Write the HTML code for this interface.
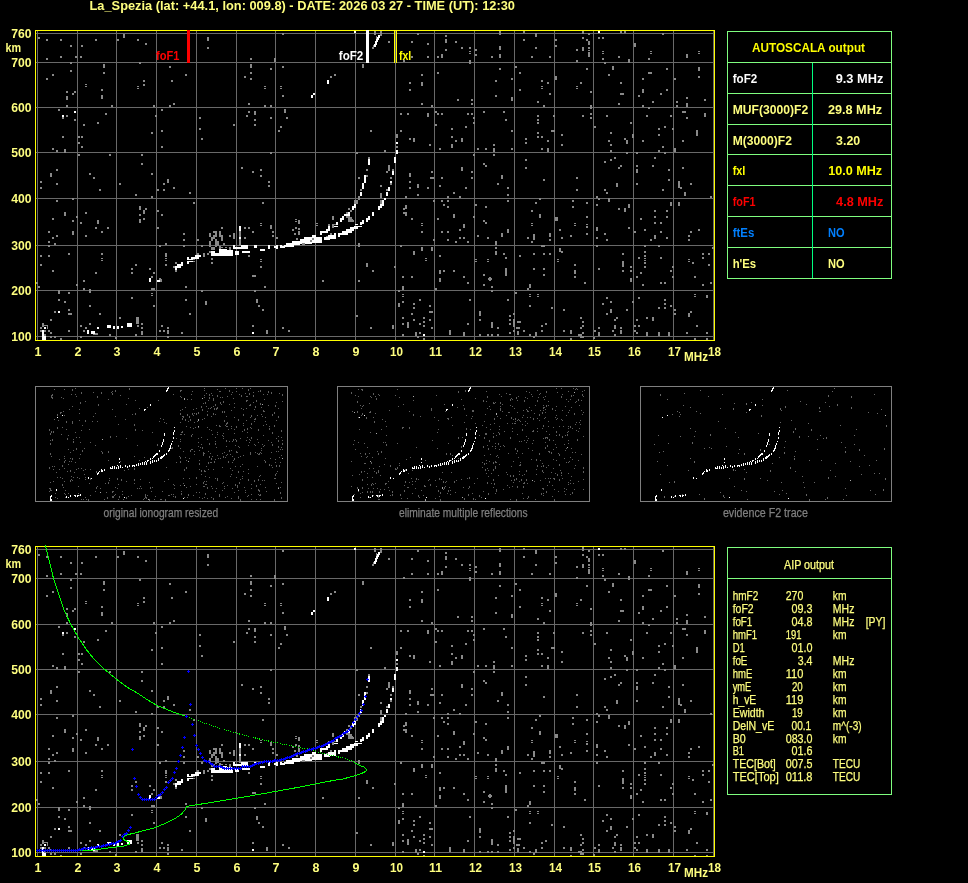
<!DOCTYPE html><html><head><meta charset="utf-8"><title>AUTOSCALA ionogram</title><style>html,body{margin:0;padding:0;background:#000;overflow:hidden}</style></head><body><svg width="968" height="883" viewBox="0 0 968 883" shape-rendering="crispEdges" style="display:block;will-change:transform;opacity:0.999">
<defs><g id="iono"><path d="M38 37h2v2h-2zM46 39h2v2h-2zM60 39h2v2h-2zM70 45h2v2h-2zM81 45h2v2h-2zM95 39h2v2h-2zM117 39h2v2h-2zM123 34h2v4h-2zM137 39h2v2h-2zM145 43h2v2h-2zM46 58h2v2h-2zM60 56h2v2h-2zM75 56h2v2h-2zM80 56h2v2h-2zM207 37h2v4h-2zM207 47h2v2h-2zM70 62h2v2h-2zM70 70h2v2h-2zM52 74h2v2h-2zM46 78h2v2h-2zM103 64h2v4h-2zM103 72h2v2h-2zM85 84h2v1h-2zM85 86h2v1h-2zM101 89h2v2h-2zM101 95h2v4h-2zM66 91h2v2h-2zM74 91h2v2h-2zM72 93h2v2h-2zM66 96h2v4h-2zM66 105h2v2h-2zM111 105h2v2h-2zM139 62h2v2h-2zM143 80h2v2h-2zM143 84h2v2h-2zM137 86h2v1h-2zM137 88h2v1h-2zM153 105h2v2h-2zM169 66h2v2h-2zM171 80h2v2h-2zM185 74h2v2h-2zM169 105h2v2h-2zM173 103h2v2h-2zM58 109h2v2h-2zM66 115h2v2h-2zM62 117h2v2h-2zM74 119h2v2h-2zM83 124h2v2h-2zM97 122h2v2h-2zM105 113h2v2h-2zM62 136h2v2h-2zM78 136h2v2h-2zM81 136h2v2h-2zM78 142h2v2h-2zM81 146h2v2h-2zM52 148h2v2h-2zM56 150h2v2h-2zM64 149h2v4h-2zM161 109h2v2h-2zM155 115h2v2h-2zM161 130h2v2h-2zM151 132h2v2h-2zM161 146h2v2h-2zM199 117h2v2h-2zM199 128h2v2h-2zM201 138h2v2h-2zM78 154h2v2h-2zM109 154h2v2h-2zM141 154h2v2h-2zM141 163h2v2h-2zM56 169h2v2h-2zM50 173h2v4h-2zM89 173h2v2h-2zM93 177h2v2h-2zM151 173h2v2h-2zM40 181h2v2h-2zM56 183h2v2h-2zM40 187h2v2h-2zM119 183h2v2h-2zM163 183h2v2h-2zM167 179h2v4h-2zM173 187h2v2h-2zM282 33h2v2h-2zM250 58h2v2h-2zM274 58h2v4h-2zM250 64h2v4h-2zM250 72h2v2h-2zM244 76h2v2h-2zM250 78h2v2h-2zM270 68h2v2h-2zM282 66h2v2h-2zM264 86h2v1h-2zM264 88h2v1h-2zM280 86h2v1h-2zM280 88h2v1h-2zM282 95h2v2h-2zM248 103h2v2h-2zM264 105h2v2h-2zM270 105h2v2h-2zM248 111h2v2h-2zM246 115h2v2h-2zM254 111h2v4h-2zM254 119h2v2h-2zM254 124h2v2h-2zM270 117h2v2h-2zM284 109h2v4h-2zM286 117h2v2h-2zM233 124h2v2h-2zM280 126h2v2h-2zM278 130h2v2h-2zM270 152h2v2h-2zM241 167h2v2h-2zM252 171h2v2h-2zM260 169h2v2h-2zM260 175h2v2h-2zM268 181h2v2h-2zM268 185h2v2h-2zM356 152h2v2h-2zM362 64h2v4h-2zM330 76h2v2h-2zM334 74h2v2h-2zM370 130h2v2h-2zM358 177h2v2h-2zM366 169h2v2h-2zM374 31h2v4h-2zM372 47h2v2h-2zM380 31h2v4h-2zM388 41h2v2h-2zM417 33h2v2h-2zM411 41h2v2h-2zM427 43h2v2h-2zM411 56h2v2h-2zM427 56h2v2h-2zM403 60h2v2h-2zM445 35h2v2h-2zM445 39h2v4h-2zM445 49h2v2h-2zM455 41h2v2h-2zM461 47h2v2h-2zM437 56h2v2h-2zM441 54h2v4h-2zM469 47h2v2h-2zM469 51h2v1h-2zM469 53h2v1h-2zM475 49h2v2h-2zM475 54h2v2h-2zM469 60h2v4h-2zM491 56h2v2h-2zM499 31h2v4h-2zM499 46h2v4h-2zM499 54h2v4h-2zM523 31h2v2h-2zM523 39h2v2h-2zM535 33h2v4h-2zM535 47h2v2h-2zM531 56h2v2h-2zM549 56h2v2h-2zM421 74h2v2h-2zM437 72h2v2h-2zM409 82h2v2h-2zM421 82h2v4h-2zM409 89h2v2h-2zM421 103h2v2h-2zM431 105h2v2h-2zM457 99h2v2h-2zM471 99h2v2h-2zM471 103h2v2h-2zM499 68h2v2h-2zM515 66h2v2h-2zM519 72h2v2h-2zM511 78h2v2h-2zM495 80h2v2h-2zM519 89h2v2h-2zM495 95h2v2h-2zM511 97h2v4h-2zM541 80h2v2h-2zM547 82h2v2h-2zM541 86h2v1h-2zM541 88h2v1h-2zM549 93h2v2h-2zM537 101h2v2h-2zM543 105h2v2h-2zM400 113h2v2h-2zM407 113h2v2h-2zM427 113h2v4h-2zM435 111h2v2h-2zM437 113h2v2h-2zM441 113h2v2h-2zM467 113h2v2h-2zM471 113h2v2h-2zM473 117h2v2h-2zM473 122h2v2h-2zM435 124h2v2h-2zM465 126h2v2h-2zM451 128h2v2h-2zM400 130h2v2h-2zM396 134h2v4h-2zM409 138h2v2h-2zM413 138h2v4h-2zM451 136h2v2h-2zM455 140h2v2h-2zM461 138h2v4h-2zM429 144h2v2h-2zM451 144h2v4h-2zM439 148h2v2h-2zM384 150h2v2h-2zM483 111h2v2h-2zM503 111h2v2h-2zM505 119h2v2h-2zM511 130h2v2h-2zM493 144h2v2h-2zM477 148h2v2h-2zM485 148h2v2h-2zM493 148h2v4h-2zM511 148h2v2h-2zM537 115h2v2h-2zM537 119h2v2h-2zM537 122h2v2h-2zM537 132h2v2h-2zM537 136h2v2h-2zM541 136h2v2h-2zM525 138h2v2h-2zM525 142h2v2h-2zM547 140h2v2h-2zM541 148h2v2h-2zM547 148h2v4h-2zM473 154h2v2h-2zM493 154h2v2h-2zM483 163h2v2h-2zM485 165h2v2h-2zM525 159h2v2h-2zM525 167h2v2h-2zM461 167h2v4h-2zM388 165h2v4h-2zM386 171h2v2h-2zM431 171h2v2h-2zM409 173h2v4h-2zM430 177h4v2h-4zM441 177h2v2h-2zM471 171h2v2h-2zM471 177h2v2h-2zM501 175h2v4h-2zM497 183h2v2h-2zM543 179h2v2h-2zM409 181h2v2h-2zM417 184h2v4h-2zM439 185h2v2h-2zM380 185h2v2h-2zM465 187h2v2h-2zM582 30h2v4h-2zM588 33h2v2h-2zM582 37h2v2h-2zM586 39h2v2h-2zM588 41h2v4h-2zM588 47h2v2h-2zM582 47h2v4h-2zM576 49h2v2h-2zM588 50h2v1h-2zM588 52h2v1h-2zM588 53h2v4h-2zM576 60h2v2h-2zM555 39h2v2h-2zM555 45h2v2h-2zM598 37h2v2h-2zM602 37h2v2h-2zM602 51h2v1h-2zM602 53h2v1h-2zM602 58h2v2h-2zM604 62h2v2h-2zM618 56h2v2h-2zM620 31h2v2h-2zM624 31h2v2h-2zM628 59h2v4h-2zM634 43h2v4h-2zM650 51h2v1h-2zM650 53h2v1h-2zM648 58h2v2h-2zM662 33h2v2h-2zM686 54h2v4h-2zM698 51h2v1h-2zM698 53h2v1h-2zM586 68h2v2h-2zM612 66h2v4h-2zM608 74h2v2h-2zM620 82h2v2h-2zM620 93h4v2h-4zM618 103h2v2h-2zM590 91h2v2h-2zM580 82h2v2h-2zM576 86h2v1h-2zM576 88h2v1h-2zM555 76h2v4h-2zM590 105h2v4h-2zM666 68h2v2h-2zM648 72h4v2h-4zM642 78h2v2h-2zM642 89h2v4h-2zM666 89h2v2h-2zM660 93h2v2h-2zM638 95h2v2h-2zM652 101h2v2h-2zM642 105h2v2h-2zM648 107h2v2h-2zM674 78h2v2h-2zM698 67h2v4h-2zM698 76h2v2h-2zM686 97h2v2h-2zM704 99h2v2h-2zM676 101h2v2h-2zM676 105h2v2h-2zM686 103h2v4h-2zM553 115h2v2h-2zM582 115h2v2h-2zM590 113h2v2h-2zM590 117h2v2h-2zM606 115h2v2h-2zM630 122h2v2h-2zM594 126h2v2h-2zM610 132h2v2h-2zM551 130h4v2h-4zM561 134h2v2h-2zM561 144h2v2h-2zM608 140h2v2h-2zM610 144h2v2h-2zM610 150h2v2h-2zM624 138h2v2h-2zM626 140h2v4h-2zM632 134h2v4h-2zM646 115h2v2h-2zM670 115h2v2h-2zM658 128h2v2h-2zM664 126h2v2h-2zM672 128h2v2h-2zM658 134h2v2h-2zM642 140h2v2h-2zM662 146h2v2h-2zM658 150h2v2h-2zM664 152h2v2h-2zM636 152h2v2h-2zM626 152h2v2h-2zM682 111h4v2h-4zM686 117h2v2h-2zM704 113h2v4h-2zM696 132h2v4h-2zM696 130h2v4h-2zM682 140h2v2h-2zM674 148h2v4h-2zM614 157h2v2h-2zM610 159h2v2h-2zM604 161h2v2h-2zM620 165h2v2h-2zM618 167h2v2h-2zM654 157h2v2h-2zM652 165h2v2h-2zM636 165h2v2h-2zM636 169h2v4h-2zM668 169h2v2h-2zM682 167h2v2h-2zM576 177h2v2h-2zM668 179h2v2h-2zM636 183h2v2h-2zM616 183h2v4h-2zM678 181h2v4h-2zM678 184h2v4h-2zM690 183h2v2h-2zM680 187h2v2h-2zM40 187h2v2h-2zM99 189h2v2h-2zM135 194h2v2h-2zM151 196h2v2h-2zM157 189h2v2h-2zM163 189h2v2h-2zM173 187h2v2h-2zM189 192h2v2h-2zM56 200h2v2h-2zM72 198h2v2h-2zM64 212h2v4h-2zM52 218h2v2h-2zM72 220h2v2h-2zM76 216h2v2h-2zM85 212h2v2h-2zM80 222h2v2h-2zM97 220h2v4h-2zM95 227h2v2h-2zM107 227h2v2h-2zM101 231h2v2h-2zM85 235h2v2h-2zM72 231h2v4h-2zM48 231h2v2h-2zM56 235h2v2h-2zM52 237h2v2h-2zM48 241h2v2h-2zM54 243h2v2h-2zM48 245h2v2h-2zM139 206h2v4h-2zM145 208h2v2h-2zM143 210h2v4h-2zM139 214h2v2h-2zM143 218h2v2h-2zM139 219h2v4h-2zM157 210h2v2h-2zM161 214h2v2h-2zM157 227h2v2h-2zM183 233h2v2h-2zM183 239h2v2h-2zM197 239h2v2h-2zM165 243h2v2h-2zM159 245h2v2h-2zM183 245h2v2h-2zM193 202h2v2h-2zM209 233h2v4h-2zM209 242h2v4h-2zM201 245h2v2h-2zM40 255h2v2h-2zM48 255h2v2h-2zM68 253h2v2h-2zM40 264h2v2h-2zM52 270h2v2h-2zM101 253h2v2h-2zM101 258h2v1h-2zM101 260h2v1h-2zM95 272h2v2h-2zM83 280h2v2h-2zM76 284h2v2h-2zM83 288h2v2h-2zM89 289h2v4h-2zM36 282h2v2h-2zM38 286h2v2h-2zM135 264h2v2h-2zM131 268h2v2h-2zM131 272h2v2h-2zM149 268h2v2h-2zM153 272h2v2h-2zM151 276h2v2h-2zM165 253h2v4h-2zM165 258h2v1h-2zM165 260h2v1h-2zM165 264h2v2h-2zM185 286h2v2h-2zM151 288h4v2h-4zM203 253h2v4h-2zM175 270h2v2h-2zM159 278h2v4h-2zM58 290h2v4h-2zM68 292h2v2h-2zM58 299h2v2h-2zM64 301h2v2h-2zM68 309h2v2h-2zM54 311h2v2h-2zM68 313h4v2h-4zM50 319h2v2h-2zM89 305h2v2h-2zM99 313h2v2h-2zM89 323h2v2h-2zM80 325h2v2h-2zM85 327h2v2h-2zM83 330h2v2h-2zM68 330h2v2h-2zM50 332h2v2h-2zM131 297h2v2h-2zM151 293h2v1h-2zM151 295h2v1h-2zM153 305h2v2h-2zM119 317h2v2h-2zM136 319h2v4h-2zM136 317h2v4h-2zM141 323h2v2h-2zM137 325h2v2h-2zM141 327h2v2h-2zM141 331h2v4h-2zM135 334h2v2h-2zM109 334h2v2h-2zM161 325h2v2h-2zM167 327h2v2h-2zM159 330h2v2h-2zM163 330h2v2h-2zM167 330h2v4h-2zM181 332h2v2h-2zM185 299h2v2h-2zM189 313h2v2h-2zM205 301h2v4h-2zM201 290h2v2h-2zM50 336h2v2h-2zM54 336h2v2h-2zM60 338h2v2h-2zM80 336h2v2h-2zM115 337h2v2h-2zM167 336h2v2h-2zM93 333h4v2h-4zM262 202h2v2h-2zM244 227h2v2h-2zM248 227h2v2h-2zM252 231h2v2h-2zM244 237h2v2h-2zM260 223h2v1h-2zM260 225h2v1h-2zM270 225h2v4h-2zM272 231h2v2h-2zM272 235h2v2h-2zM276 237h2v2h-2zM211 258h2v2h-2zM211 262h2v2h-2zM260 259h2v1h-2zM260 261h2v1h-2zM260 266h2v2h-2zM252 275h4v2h-4zM264 286h2v2h-2zM254 290h2v2h-2zM256 299h2v4h-2zM258 305h2v2h-2zM262 309h2v2h-2zM252 325h2v2h-2zM266 330h2v4h-2zM282 327h2v2h-2zM288 330h2v2h-2zM322 280h2v2h-2zM358 280h2v2h-2zM358 243h2v4h-2zM366 263h2v4h-2zM372 270h2v2h-2zM356 315h2v2h-2zM370 327h2v2h-2zM248 255h2v2h-2zM295 219h2v1h-2zM295 221h2v1h-2zM298 220h2v4h-2zM295 227h2v2h-2zM298 228h2v2h-2zM292 229h2v2h-2zM294 233h2v2h-2zM298 231h2v4h-2zM296 238h2v2h-2zM332 216h2v4h-2zM332 225h2v1h-2zM332 227h2v1h-2zM316 223h2v1h-2zM316 225h2v1h-2zM328 224h2v2h-2zM330 233h2v2h-2zM326 236h2v2h-2zM348 208h2v2h-2zM348 217h4v2h-4zM351 219h2v2h-2zM409 187h2v2h-2zM427 187h2v2h-2zM465 187h2v2h-2zM507 187h2v2h-2zM453 192h2v2h-2zM417 194h2v2h-2zM507 194h2v2h-2zM405 196h2v2h-2zM447 196h2v2h-2zM459 196h2v2h-2zM380 193h2v4h-2zM433 200h2v2h-2zM441 200h2v2h-2zM447 200h2v2h-2zM443 204h2v2h-2zM447 206h2v2h-2zM403 208h2v2h-2zM405 205h2v4h-2zM403 212h2v2h-2zM405 212h2v4h-2zM411 218h2v2h-2zM437 218h2v2h-2zM453 214h2v4h-2zM421 223h2v1h-2zM421 225h2v1h-2zM421 231h2v2h-2zM441 231h2v2h-2zM447 231h2v2h-2zM463 224h2v4h-2zM459 229h2v2h-2zM459 237h2v2h-2zM463 237h2v2h-2zM447 239h2v2h-2zM455 241h2v2h-2zM467 241h2v2h-2zM433 239h2v2h-2zM475 204h2v2h-2zM485 206h2v2h-2zM473 216h2v2h-2zM483 220h2v2h-2zM485 222h2v2h-2zM477 235h2v2h-2zM487 237h2v2h-2zM507 200h2v2h-2zM507 229h2v4h-2zM501 233h2v4h-2zM495 241h2v4h-2zM539 198h2v2h-2zM535 202h2v2h-2zM531 210h2v2h-2zM539 214h2v4h-2zM531 223h2v1h-2zM531 225h2v1h-2zM533 236h2v4h-2zM533 234h2v4h-2zM527 237h2v2h-2zM531 241h2v2h-2zM549 233h2v4h-2zM549 239h2v2h-2zM400 245h2v2h-2zM421 247h2v4h-2zM431 247h2v4h-2zM413 251h2v4h-2zM425 258h2v1h-2zM425 260h2v1h-2zM439 255h2v2h-2zM394 266h2v2h-2zM439 270h2v4h-2zM443 270h2v2h-2zM453 270h2v2h-2zM402 276h2v2h-2zM411 276h2v2h-2zM439 278h2v4h-2zM463 276h2v2h-2zM467 282h2v2h-2zM402 286h2v4h-2zM435 288h2v2h-2zM495 247h2v2h-2zM495 251h2v4h-2zM503 253h2v2h-2zM505 257h2v2h-2zM475 259h2v1h-2zM475 261h2v1h-2zM487 259h2v1h-2zM487 261h2v1h-2zM505 270h2v4h-2zM505 268h2v4h-2zM505 272h2v4h-2zM483 274h2v2h-2zM489 277h2v4h-2zM488 278h4v2h-4zM483 284h2v2h-2zM491 286h2v2h-2zM491 290h2v2h-2zM519 255h2v2h-2zM533 253h2v2h-2zM543 253h2v2h-2zM549 253h2v2h-2zM533 268h2v2h-2zM543 268h2v2h-2zM543 274h2v2h-2zM529 284h2v4h-2zM527 288h2v2h-2zM541 245h4v2h-4zM398 290h2v2h-2zM402 294h2v1h-2zM402 296h2v1h-2zM402 301h2v2h-2zM398 303h2v4h-2zM419 299h2v2h-2zM413 303h2v2h-2zM413 307h2v2h-2zM429 305h2v2h-2zM429 311h4v2h-4zM411 313h2v2h-2zM402 317h2v2h-2zM423 317h2v2h-2zM413 319h2v2h-2zM429 319h2v2h-2zM423 321h2v2h-2zM419 323h2v2h-2zM402 323h2v2h-2zM407 324h2v4h-2zM407 322h2v4h-2zM423 325h2v2h-2zM392 325h2v4h-2zM431 327h2v2h-2zM402 334h2v2h-2zM415 332h2v4h-2zM419 332h2v2h-2zM417 336h2v2h-2zM423 338h2v2h-2zM449 331h2v4h-2zM449 330h2v4h-2zM463 332h2v4h-2zM469 299h2v2h-2zM467 323h2v2h-2zM479 312h2v4h-2zM479 311h2v4h-2zM479 319h2v2h-2zM491 324h2v4h-2zM491 322h2v4h-2zM497 327h2v2h-2zM479 334h2v2h-2zM487 334h2v2h-2zM491 334h2v2h-2zM497 334h2v2h-2zM507 299h2v2h-2zM515 292h2v2h-2zM529 294h2v1h-2zM529 296h2v1h-2zM537 294h2v1h-2zM537 296h2v1h-2zM529 305h2v2h-2zM513 313h2v2h-2zM509 315h2v2h-2zM509 319h2v2h-2zM509 323h2v2h-2zM513 321h2v4h-2zM513 319h2v4h-2zM513 323h2v4h-2zM517 321h4v2h-4zM516 327h4v2h-4zM517 331h2v4h-2zM509 332h2v2h-2zM513 330h2v2h-2zM523 330h2v2h-2zM529 334h2v2h-2zM535 332h2v4h-2zM533 336h2v2h-2zM541 325h2v2h-2zM545 323h2v2h-2zM541 330h2v2h-2zM576 189h2v2h-2zM604 189h2v2h-2zM606 192h2v2h-2zM662 189h2v2h-2zM680 187h2v2h-2zM684 192h2v4h-2zM710 196h2v2h-2zM596 196h2v2h-2zM598 198h2v2h-2zM608 198h2v4h-2zM596 204h2v2h-2zM572 200h2v2h-2zM572 206h2v2h-2zM586 202h2v2h-2zM555 217h2v4h-2zM556 217h2v4h-2zM586 216h2v2h-2zM574 223h2v1h-2zM574 225h2v1h-2zM586 224h2v1h-2zM586 226h2v1h-2zM586 226h2v2h-2zM559 229h2v2h-2zM586 233h2v2h-2zM570 235h2v2h-2zM561 237h2v2h-2zM628 204h2v4h-2zM624 208h2v4h-2zM618 208h2v2h-2zM628 227h2v2h-2zM596 227h2v4h-2zM604 233h2v2h-2zM596 237h2v2h-2zM606 239h2v2h-2zM670 202h2v4h-2zM678 202h2v4h-2zM654 210h2v2h-2zM666 210h2v2h-2zM654 216h2v2h-2zM666 216h2v2h-2zM640 218h2v2h-2zM654 222h2v2h-2zM660 222h2v2h-2zM644 229h2v2h-2zM634 231h2v2h-2zM660 231h2v2h-2zM654 235h2v4h-2zM650 239h2v2h-2zM666 237h2v2h-2zM698 229h2v2h-2zM690 231h2v2h-2zM688 235h2v2h-2zM688 239h2v2h-2zM596 245h2v2h-2zM644 245h2v2h-2zM658 245h2v2h-2zM712 247h2v2h-2zM559 248h2v4h-2zM561 251h2v2h-2zM557 259h2v1h-2zM557 261h2v1h-2zM574 264h2v2h-2zM574 270h2v4h-2zM574 276h2v2h-2zM584 282h2v2h-2zM598 268h2v2h-2zM622 253h2v2h-2zM622 263h2v4h-2zM622 261h2v4h-2zM622 270h2v2h-2zM630 266h2v2h-2zM630 270h2v2h-2zM630 278h2v4h-2zM644 251h2v2h-2zM644 255h2v2h-2zM644 258h2v1h-2zM644 260h2v1h-2zM644 262h2v2h-2zM644 266h2v2h-2zM638 257h2v2h-2zM660 257h2v2h-2zM640 272h2v2h-2zM636 276h2v2h-2zM642 284h2v2h-2zM660 282h2v2h-2zM664 282h2v2h-2zM670 270h2v2h-2zM672 266h2v2h-2zM672 276h2v2h-2zM702 253h2v2h-2zM708 253h2v2h-2zM702 257h2v2h-2zM688 259h2v1h-2zM688 261h2v1h-2zM692 262h2v2h-2zM708 264h2v2h-2zM694 276h2v2h-2zM702 284h2v2h-2zM710 282h2v2h-2zM694 294h2v1h-2zM694 296h2v1h-2zM706 295h2v1h-2zM706 297h2v1h-2zM706 296h2v2h-2zM606 297h2v2h-2zM610 301h2v2h-2zM602 303h2v2h-2zM632 301h2v2h-2zM638 297h2v2h-2zM664 299h2v2h-2zM664 303h2v2h-2zM658 307h2v2h-2zM664 307h2v2h-2zM670 305h2v2h-2zM551 307h2v2h-2zM563 309h2v2h-2zM610 309h2v4h-2zM606 313h2v2h-2zM626 309h2v2h-2zM674 309h2v2h-2zM674 313h2v2h-2zM690 311h2v2h-2zM688 313h2v4h-2zM580 317h2v2h-2zM582 321h2v2h-2zM582 325h2v2h-2zM580 327h2v2h-2zM616 317h2v2h-2zM614 319h2v2h-2zM646 317h2v2h-2zM652 317h2v4h-2zM636 319h2v2h-2zM563 330h2v2h-2zM570 330h2v4h-2zM582 332h2v2h-2zM578 334h4v2h-4zM580 336h4v2h-4zM598 327h2v2h-2zM594 330h2v2h-2zM598 332h2v4h-2zM614 325h2v4h-2zM612 330h2v2h-2zM620 327h2v2h-2zM620 330h2v4h-2zM614 334h2v2h-2zM634 325h2v2h-2zM638 325h2v2h-2zM634 330h2v2h-2zM636 332h2v2h-2zM646 332h2v4h-2zM658 332h2v4h-2zM668 332h2v4h-2zM686 332h2v2h-2zM696 325h2v2h-2zM706 332h2v2h-2zM570 338h2v2h-2zM593 337h2v2h-2zM694 338h2v2h-2zM706 338h2v2h-2zM40 327h2v2h-2zM42 323h2v4h-2zM44 325h4v1h-4zM47 325h1v4h-1zM40 330h2v2h-2zM44 330h2v2h-2zM48 330h2v2h-2zM50 332h2v2h-2zM44 334h2v2h-2zM94 333h4v2h-4zM136 317h3v7h-3zM160 279h2v3h-2zM239 231h2v6h-2zM239 239h2v7h-2zM396 134h2v3h-2zM396 146h2v2h-2zM368 157h2v2h-2zM358 177h2v2h-2zM360 189h2v2h-2zM373 45h2v2h-2zM380 33h2v3h-2zM376 36h1v3h-1z" fill="#8a8a8a"/><path d="M74 111h2v2h-2zM62 115h2v2h-2zM58 311h2v2h-2zM252 332h2v2h-2zM423 334h2v2h-2zM42 330h2v10h-2zM44 336h2v4h-2zM44 327h2v2h-2zM87 330h2v4h-2zM91 331h4v3h-4zM97 327h2v2h-2zM107 325h4v3h-4zM113 326h2v3h-2zM117 326h2v3h-2zM121 326h2v2h-2zM127 323h5v4h-5zM149 278h2v4h-2zM157 280h3v2h-3zM175 266h2v4h-2zM175 266h6v2h-6zM177 264h6v2h-6zM181 262h2v2h-2zM187 257h2v3h-2zM187 259h6v1h-6zM191 257h8v2h-8zM195 255h6v2h-6zM187 261h2v3h-2zM187 261h6v1h-6zM211 251h4v5h-4zM215 253h4v3h-4zM219 249h8v7h-8zM227 250h6v6h-6zM235 251h4v4h-4zM233 245h2v2h-2zM233 247h8v2h-8zM241 245h7v4h-7zM242 251h8v2h-8zM239 226h2v5h-2zM239 237h2v2h-2zM254 245h3v3h-3zM260 249h5v2h-5zM268 245h2v4h-2zM274 246h4v2h-4zM280 246h5v2h-5zM276 245h2v4h-2zM280 245h2v2h-2zM284 245h10v2h-10zM286 243h14v2h-14zM292 241h12v2h-12zM300 239h12v5h-12zM304 237h12v2h-12zM312 235h4v2h-4zM312 239h10v4h-10zM316 237h6v2h-6zM324 237h6v3h-6zM328 235h2v2h-2zM330 235h6v4h-6zM334 233h2v2h-2zM338 233h2v4h-2zM340 233h8v2h-8zM342 231h10v2h-10zM346 229h8v2h-8zM350 227h8v2h-8zM354 226h4v1h-4zM355 224h3v1h-3zM358 226h4v1h-4zM360 222h2v3h-2zM362 220h2v4h-2zM366 218h2v4h-2zM368 216h2v4h-2zM372 212h2v4h-2zM378 206h2v4h-2zM380 204h2v4h-2zM382 200h2v6h-2zM384 198h2v2h-2zM386 192h2v4h-2zM388 187h2v4h-2zM390 181h2v2h-2zM392 171h2v4h-2zM394 157h2v6h-2zM396 150h2v4h-2zM396 142h2v2h-2zM320 231h2v4h-2zM320 231h8v2h-8zM326 229h4v2h-4zM328 226h2v3h-2zM336 222h2v3h-2zM334 226h4v1h-4zM340 218h2v4h-2zM342 216h2v4h-2zM344 214h6v2h-6zM348 212h2v4h-2zM352 206h2v4h-2zM354 204h2v4h-2zM360 192h2v4h-2zM362 183h2v6h-2zM364 175h2v8h-2zM368 159h2v6h-2zM598 31h2v2h-2zM311 95h2v3h-2zM313 93h2v2h-2zM327 80h2v4h-2zM354 31h2v2h-2zM374 44h2v3h-2zM375 41h2v4h-2zM376 39h2v3h-2zM377 37h2v3h-2zM378 35h2v3h-2z" fill="#fff"/><path d="M209 233h2v4h-2zM213 231h4v2h-4zM215 233h2v4h-2zM213 235h2v4h-2zM211 237h2v4h-2zM219 231h2v6h-2zM221 235h2v6h-2zM221 227h2v2h-2zM209 241h2v6h-2zM215 239h2v8h-2zM217 241h2v5h-2zM223 243h2v2h-2zM229 235h2v2h-2zM233 233h2v6h-2zM211 247h4v3h-4zM219 246h2v3h-2zM221 247h2v1h-2zM225 247h2v1h-2zM229 247h2v3h-2zM209 251h2v2h-2zM175 262h2v2h-2zM173 266h2v2h-2zM175 270h2v2h-2zM197 253h2v2h-2zM193 259h2v1h-2zM193 261h2v1h-2zM203 253h2v4h-2zM207 253h2v2h-2zM332 224h4v1h-4zM332 226h2v2h-2zM346 212h2v2h-2zM346 216h4v2h-4zM348 218h4v4h-4zM352 220h2v2h-2zM348 208h2v2h-2zM350 210h2v2h-2zM332 216h2v4h-2zM354 200h4v4h-4zM358 196h2v4h-2zM380 196h2v2h-2zM380 200h2v4h-2zM366 169h2v2h-2zM366 175h2v2h-2zM386 189h2v2h-2zM390 183h2v2h-2zM392 169h2v2h-2zM390 177h2v2h-2zM386 171h2v2h-2zM388 165h2v6h-2zM302 243h3v2h-3zM310 240h2v2h-2zM312 238h2v2h-2z" fill="#8a8a8a"/></g></defs>
<rect x="0" y="0" width="968" height="883" fill="#000"/>
<text x="89.5" y="10" fill="#ffff80" font-family="Liberation Sans, sans-serif" font-weight="bold" font-size="12.5" textLength="425.5" lengthAdjust="spacingAndGlyphs" xml:space="preserve">La_Spezia (lat: +44.1, lon: 009.8) - DATE: 2026 03 27 - TIME (UT): 12:30</text>
<g transform="translate(0,0)">
<path d="M37 31h1v309h-1zM77 31h1v309h-1zM116 31h1v309h-1zM156 31h1v309h-1zM196 31h1v309h-1zM236 31h1v309h-1zM275 31h1v309h-1zM315 31h1v309h-1zM355 31h1v309h-1zM395 31h1v309h-1zM434 31h1v309h-1zM474 31h1v309h-1zM514 31h1v309h-1zM554 31h1v309h-1zM593 31h1v309h-1zM633 31h1v309h-1zM673 31h1v309h-1zM713 31h1v309h-1zM36 33h678v1h-678zM36 62h678v1h-678zM36 107h678v1h-678zM36 152h678v1h-678zM36 198h678v1h-678zM36 245h678v1h-678zM36 290h678v1h-678zM36 336h678v1h-678z" fill="#6a6a6a"/>
<use href="#iono"/>
<path d="M35 30h680v1h-680zM35 340h680v1h-680zM35 30h1v311h-1zM714 30h1v311h-1z" fill="#ffff00"/>
<text x="31.5" y="38" fill="#ffff80" font-family="Liberation Sans, sans-serif" font-weight="bold" font-size="12.5" text-anchor="end" textLength="20.3" lengthAdjust="spacingAndGlyphs" xml:space="preserve">760</text>
<text x="31.5" y="67" fill="#ffff80" font-family="Liberation Sans, sans-serif" font-weight="bold" font-size="12.5" text-anchor="end" textLength="20.3" lengthAdjust="spacingAndGlyphs" xml:space="preserve">700</text>
<text x="31.5" y="112" fill="#ffff80" font-family="Liberation Sans, sans-serif" font-weight="bold" font-size="12.5" text-anchor="end" textLength="20.3" lengthAdjust="spacingAndGlyphs" xml:space="preserve">600</text>
<text x="31.5" y="157" fill="#ffff80" font-family="Liberation Sans, sans-serif" font-weight="bold" font-size="12.5" text-anchor="end" textLength="20.3" lengthAdjust="spacingAndGlyphs" xml:space="preserve">500</text>
<text x="31.5" y="203" fill="#ffff80" font-family="Liberation Sans, sans-serif" font-weight="bold" font-size="12.5" text-anchor="end" textLength="20.3" lengthAdjust="spacingAndGlyphs" xml:space="preserve">400</text>
<text x="31.5" y="250" fill="#ffff80" font-family="Liberation Sans, sans-serif" font-weight="bold" font-size="12.5" text-anchor="end" textLength="20.3" lengthAdjust="spacingAndGlyphs" xml:space="preserve">300</text>
<text x="31.5" y="295" fill="#ffff80" font-family="Liberation Sans, sans-serif" font-weight="bold" font-size="12.5" text-anchor="end" textLength="20.3" lengthAdjust="spacingAndGlyphs" xml:space="preserve">200</text>
<text x="31.5" y="341" fill="#ffff80" font-family="Liberation Sans, sans-serif" font-weight="bold" font-size="12.5" text-anchor="end" textLength="20.3" lengthAdjust="spacingAndGlyphs" xml:space="preserve">100</text>
<text x="5.5" y="52" fill="#ffff80" font-family="Liberation Sans, sans-serif" font-weight="bold" font-size="12.5" textLength="15.6" lengthAdjust="spacingAndGlyphs" xml:space="preserve">km</text>
<text x="38" y="356" fill="#ffff80" font-family="Liberation Sans, sans-serif" font-weight="bold" font-size="12.5" text-anchor="middle" xml:space="preserve">1</text>
<text x="78" y="356" fill="#ffff80" font-family="Liberation Sans, sans-serif" font-weight="bold" font-size="12.5" text-anchor="middle" xml:space="preserve">2</text>
<text x="117" y="356" fill="#ffff80" font-family="Liberation Sans, sans-serif" font-weight="bold" font-size="12.5" text-anchor="middle" xml:space="preserve">3</text>
<text x="157" y="356" fill="#ffff80" font-family="Liberation Sans, sans-serif" font-weight="bold" font-size="12.5" text-anchor="middle" xml:space="preserve">4</text>
<text x="197" y="356" fill="#ffff80" font-family="Liberation Sans, sans-serif" font-weight="bold" font-size="12.5" text-anchor="middle" xml:space="preserve">5</text>
<text x="237" y="356" fill="#ffff80" font-family="Liberation Sans, sans-serif" font-weight="bold" font-size="12.5" text-anchor="middle" xml:space="preserve">6</text>
<text x="276" y="356" fill="#ffff80" font-family="Liberation Sans, sans-serif" font-weight="bold" font-size="12.5" text-anchor="middle" xml:space="preserve">7</text>
<text x="316" y="356" fill="#ffff80" font-family="Liberation Sans, sans-serif" font-weight="bold" font-size="12.5" text-anchor="middle" xml:space="preserve">8</text>
<text x="356" y="356" fill="#ffff80" font-family="Liberation Sans, sans-serif" font-weight="bold" font-size="12.5" text-anchor="middle" xml:space="preserve">9</text>
<text x="396.5" y="356" fill="#ffff80" font-family="Liberation Sans, sans-serif" font-weight="bold" font-size="12.5" text-anchor="middle" textLength="13" lengthAdjust="spacingAndGlyphs" xml:space="preserve">10</text>
<text x="435.5" y="356" fill="#ffff80" font-family="Liberation Sans, sans-serif" font-weight="bold" font-size="12.5" text-anchor="middle" textLength="13" lengthAdjust="spacingAndGlyphs" xml:space="preserve">11</text>
<text x="475.5" y="356" fill="#ffff80" font-family="Liberation Sans, sans-serif" font-weight="bold" font-size="12.5" text-anchor="middle" textLength="13" lengthAdjust="spacingAndGlyphs" xml:space="preserve">12</text>
<text x="515.5" y="356" fill="#ffff80" font-family="Liberation Sans, sans-serif" font-weight="bold" font-size="12.5" text-anchor="middle" textLength="13" lengthAdjust="spacingAndGlyphs" xml:space="preserve">13</text>
<text x="555.5" y="356" fill="#ffff80" font-family="Liberation Sans, sans-serif" font-weight="bold" font-size="12.5" text-anchor="middle" textLength="13" lengthAdjust="spacingAndGlyphs" xml:space="preserve">14</text>
<text x="594.5" y="356" fill="#ffff80" font-family="Liberation Sans, sans-serif" font-weight="bold" font-size="12.5" text-anchor="middle" textLength="13" lengthAdjust="spacingAndGlyphs" xml:space="preserve">15</text>
<text x="634.5" y="356" fill="#ffff80" font-family="Liberation Sans, sans-serif" font-weight="bold" font-size="12.5" text-anchor="middle" textLength="13" lengthAdjust="spacingAndGlyphs" xml:space="preserve">16</text>
<text x="674.5" y="356" fill="#ffff80" font-family="Liberation Sans, sans-serif" font-weight="bold" font-size="12.5" text-anchor="middle" textLength="13" lengthAdjust="spacingAndGlyphs" xml:space="preserve">17</text>
<text x="714.5" y="356" fill="#ffff80" font-family="Liberation Sans, sans-serif" font-weight="bold" font-size="12.5" text-anchor="middle" textLength="13" lengthAdjust="spacingAndGlyphs" xml:space="preserve">18</text>
<text x="684" y="361" fill="#ffff80" font-family="Liberation Sans, sans-serif" font-weight="bold" font-size="12.5" textLength="24" lengthAdjust="spacingAndGlyphs" xml:space="preserve">MHz</text>
</g>
<g transform="translate(0,516)">
<path d="M37 31h1v309h-1zM77 31h1v309h-1zM116 31h1v309h-1zM156 31h1v309h-1zM196 31h1v309h-1zM236 31h1v309h-1zM275 31h1v309h-1zM315 31h1v309h-1zM355 31h1v309h-1zM395 31h1v309h-1zM434 31h1v309h-1zM474 31h1v309h-1zM514 31h1v309h-1zM554 31h1v309h-1zM593 31h1v309h-1zM633 31h1v309h-1zM673 31h1v309h-1zM713 31h1v309h-1zM36 33h678v1h-678zM36 62h678v1h-678zM36 108h678v1h-678zM36 153h678v1h-678zM36 198h678v1h-678zM36 245h678v1h-678zM36 291h678v1h-678zM36 336h678v1h-678z" fill="#6a6a6a"/>
<use href="#iono" y="1"/>
<path d="M35 30h680v1h-680zM35 340h680v1h-680zM35 30h1v311h-1zM714 30h1v311h-1z" fill="#ffff00"/>
<polyline points="45.2,28.6 45.6,30.0 48.6,42.6 53.2,61.2 57.9,76.1 64.4,94.7 70.9,108.6 78.3,121.6 85.8,132.8 93.2,142.1 104.4,153.2 115.5,162.5 126.7,170.9 137.8,177.4 146.2,183.0 157.2,189.6 175.8,197.0 186.9,200.7" fill="none" stroke="#00ff00" stroke-width="1" shape-rendering="crispEdges" /><polyline points="186.9,200.7 203.7,206.8 222.3,213.2 240.9,218.4 259.5,223.0 278.0,227.1 298.5,231.4 307.2,232.9 316.5,235.5 325.8,238.3 335.1,240.1 340.4,241.5 344.3,242.4 347.4,243.3 350.5,244.4 354.3,245.5" fill="none" stroke="#00ff00" stroke-width="1" shape-rendering="crispEdges" stroke-dasharray="1 1.3"/><polyline points="354.3,246.5 355.5,247.5 357.8,248.5 360.0,249.5 362.5,250.5 364.6,251.4 365.8,252.6 366.9,253.9 365.8,255.1 364.8,255.9 362.5,257.0 360.2,258.0 357.8,258.8 354.9,259.7 351.6,260.7 347.6,261.7 343.3,263.0 340.0,263.4 325.8,265.8 297.9,271.4 270.0,276.4 240.9,281.6 213.0,286.2 188.8,290.0 186.6,290.9 185.1,293.7 181.4,298.3 174.0,303.2 163.5,308.1 152.9,312.3 142.4,314.9 135.4,316.9 128.4,318.5 124.8,319.9 123.1,322.1 124.0,323.7 126.6,325.1 129.8,326.4 129.2,328.1 124.8,329.9 114.3,331.3 103.8,332.5 95.0,333.9 77.4,334.8" fill="none" stroke="#00ff00" stroke-width="1" shape-rendering="crispEdges" /><path d="M36 334h3v1h-3zM37 333h1v3h-1zM38 334h3v1h-3zM39 333h1v3h-1zM40 334h3v1h-3zM41 333h1v3h-1zM42 334h3v1h-3zM43 333h1v3h-1zM44 334h3v1h-3zM45 333h1v3h-1zM46 334h3v1h-3zM47 333h1v3h-1zM48 334h3v1h-3zM49 333h1v3h-1zM50 334h3v1h-3zM51 333h1v3h-1zM52 334h3v1h-3zM53 333h1v3h-1zM54 334h3v1h-3zM55 333h1v3h-1zM56 334h3v1h-3zM57 333h1v3h-1zM58 334h3v1h-3zM59 333h1v3h-1zM60 334h3v1h-3zM61 333h1v3h-1zM62 334h3v1h-3zM63 333h1v3h-1zM64 334h3v1h-3zM65 333h1v3h-1zM66 334h3v1h-3zM67 333h1v3h-1zM68 334h3v1h-3zM69 333h1v3h-1zM70 334h3v1h-3zM71 333h1v3h-1zM72 334h3v1h-3zM73 333h1v3h-1zM74 334h3v1h-3zM75 333h1v3h-1zM76 334h3v1h-3zM77 333h1v3h-1zM78 333h3v1h-3zM79 332h1v3h-1zM80 333h3v1h-3zM81 332h1v3h-1zM82 332h3v1h-3zM83 331h1v3h-1zM84 332h3v1h-3zM85 331h1v3h-1zM86 332h3v1h-3zM87 331h1v3h-1zM88 332h3v1h-3zM89 331h1v3h-1zM90 331h3v1h-3zM91 330h1v3h-1zM92 331h3v1h-3zM93 330h1v3h-1zM94 331h3v1h-3zM95 330h1v3h-1zM96 330h3v1h-3zM97 329h1v3h-1zM98 330h3v1h-3zM99 329h1v3h-1zM100 330h3v1h-3zM101 329h1v3h-1zM102 329h3v1h-3zM103 328h1v3h-1zM104 329h3v1h-3zM105 328h1v3h-1zM106 328h3v1h-3zM107 327h1v3h-1zM108 328h3v1h-3zM109 327h1v3h-1zM110 327h3v1h-3zM111 326h1v3h-1zM112 327h3v1h-3zM113 326h1v3h-1zM114 327h3v1h-3zM115 326h1v3h-1zM115 326h3v1h-3zM116 325h1v3h-1zM117 325h3v1h-3zM118 324h1v3h-1zM119 324h3v1h-3zM120 323h1v3h-1zM121 320h3v1h-3zM122 319h1v3h-1zM123 318h3v1h-3zM124 317h1v3h-1zM125 317h3v1h-3zM126 316h1v3h-1zM127 314h3v1h-3zM128 313h1v3h-1zM129 311h3v1h-3zM130 310h1v3h-1zM131 233h3v1h-3zM132 232h1v3h-1zM133 262h3v1h-3zM134 261h1v3h-1zM135 270h3v1h-3zM136 269h1v3h-1zM137 278h3v1h-3zM138 277h1v3h-1zM139 281h3v1h-3zM140 280h1v3h-1zM141 283h3v1h-3zM142 282h1v3h-1zM143 283h3v1h-3zM144 282h1v3h-1zM145 283h3v1h-3zM146 282h1v3h-1zM147 283h3v1h-3zM148 282h1v3h-1zM149 283h3v1h-3zM150 282h1v3h-1zM151 283h3v1h-3zM152 282h1v3h-1zM153 283h3v1h-3zM154 282h1v3h-1zM155 281h3v1h-3zM156 280h1v3h-1zM157 279h3v1h-3zM158 278h1v3h-1zM159 278h3v1h-3zM160 277h1v3h-1zM161 276h3v1h-3zM162 275h1v3h-1zM163 273h3v1h-3zM164 272h1v3h-1zM165 271h3v1h-3zM166 270h1v3h-1zM167 266h3v1h-3zM168 265h1v3h-1zM169 264h3v1h-3zM170 263h1v3h-1zM171 262h3v1h-3zM172 261h1v3h-1zM173 256h3v1h-3zM174 255h1v3h-1zM175 252h3v1h-3zM176 251h1v3h-1zM177 245h3v1h-3zM178 244h1v3h-1zM179 239h3v1h-3zM180 238h1v3h-1zM181 231h3v1h-3zM182 230h1v3h-1zM183 221h3v1h-3zM184 220h1v3h-1zM185 200h3v1h-3zM186 199h1v3h-1zM187 155h3v1h-3zM188 154h1v3h-1zM189 188h3v1h-3zM190 187h1v3h-1zM191 208h3v1h-3zM192 207h1v3h-1zM193 219h3v1h-3zM194 218h1v3h-1zM195 229h3v1h-3zM196 228h1v3h-1zM197 233h3v1h-3zM198 232h1v3h-1zM199 237h3v1h-3zM200 236h1v3h-1zM201 241h3v1h-3zM202 240h1v3h-1zM203 244h3v1h-3zM204 243h1v3h-1zM205 245h3v1h-3zM206 244h1v3h-1zM207 245h3v1h-3zM208 244h1v3h-1zM209 247h3v1h-3zM210 246h1v3h-1zM211 248h3v1h-3zM212 247h1v3h-1zM213 250h3v1h-3zM214 249h1v3h-1zM215 250h3v1h-3zM216 249h1v3h-1zM217 250h3v1h-3zM218 249h1v3h-1zM219 250h3v1h-3zM220 249h1v3h-1zM221 251h3v1h-3zM222 250h1v3h-1zM223 252h3v1h-3zM224 251h1v3h-1zM225 252h3v1h-3zM226 251h1v3h-1zM227 252h3v1h-3zM228 251h1v3h-1zM229 252h3v1h-3zM230 251h1v3h-1zM231 252h3v1h-3zM232 251h1v3h-1zM233 252h3v1h-3zM234 251h1v3h-1zM235 252h3v1h-3zM236 251h1v3h-1zM237 252h3v1h-3zM238 251h1v3h-1zM239 252h3v1h-3zM240 251h1v3h-1zM241 250h3v1h-3zM242 249h1v3h-1zM243 250h3v1h-3zM244 249h1v3h-1zM245 250h3v1h-3zM246 249h1v3h-1zM247 250h3v1h-3zM248 249h1v3h-1zM249 250h3v1h-3zM250 249h1v3h-1zM251 249h3v1h-3zM252 248h1v3h-1zM253 248h3v1h-3zM254 247h1v3h-1zM255 247h3v1h-3zM256 246h1v3h-1zM257 247h3v1h-3zM258 246h1v3h-1zM259 246h3v1h-3zM260 245h1v3h-1zM261 246h3v1h-3zM262 245h1v3h-1zM263 245h3v1h-3zM264 244h1v3h-1zM265 245h3v1h-3zM266 244h1v3h-1zM267 245h3v1h-3zM268 244h1v3h-1zM269 245h3v1h-3zM270 244h1v3h-1zM271 245h3v1h-3zM272 244h1v3h-1zM273 244h3v1h-3zM274 243h1v3h-1zM274 244h3v1h-3zM275 243h1v3h-1zM276 244h3v1h-3zM277 243h1v3h-1zM278 244h3v1h-3zM279 243h1v3h-1zM280 243h3v1h-3zM281 242h1v3h-1zM282 243h3v1h-3zM283 242h1v3h-1zM284 242h3v1h-3zM285 241h1v3h-1zM286 241h3v1h-3zM287 240h1v3h-1zM288 241h3v1h-3zM289 240h1v3h-1zM290 240h3v1h-3zM291 239h1v3h-1zM292 239h3v1h-3zM293 238h1v3h-1zM294 238h3v1h-3zM295 237h1v3h-1zM296 237h3v1h-3zM297 236h1v3h-1zM298 237h3v1h-3zM299 236h1v3h-1zM300 236h3v1h-3zM301 235h1v3h-1zM302 235h3v1h-3zM303 234h1v3h-1zM304 235h3v1h-3zM305 234h1v3h-1zM306 234h3v1h-3zM307 233h1v3h-1zM308 233h3v1h-3zM309 232h1v3h-1zM310 233h3v1h-3zM311 232h1v3h-1zM312 232h3v1h-3zM313 231h1v3h-1zM314 232h3v1h-3zM315 231h1v3h-1zM316 231h3v1h-3zM317 230h1v3h-1zM318 230h3v1h-3zM319 229h1v3h-1zM320 230h3v1h-3zM321 229h1v3h-1zM322 229h3v1h-3zM323 228h1v3h-1zM324 228h3v1h-3zM325 227h1v3h-1zM326 227h3v1h-3zM327 226h1v3h-1zM328 226h3v1h-3zM329 225h1v3h-1zM330 225h3v1h-3zM331 224h1v3h-1zM332 224h3v1h-3zM333 223h1v3h-1zM334 222h3v1h-3zM335 221h1v3h-1zM336 221h3v1h-3zM337 220h1v3h-1zM338 220h3v1h-3zM339 219h1v3h-1zM340 219h3v1h-3zM341 218h1v3h-1zM342 217h3v1h-3zM343 216h1v3h-1zM344 216h3v1h-3zM345 215h1v3h-1zM346 215h3v1h-3zM347 214h1v3h-1zM348 213h3v1h-3zM349 212h1v3h-1zM350 210h3v1h-3zM351 209h1v3h-1zM352 206h3v1h-3zM353 205h1v3h-1zM354 203h3v1h-3zM355 202h1v3h-1zM356 200h3v1h-3zM357 199h1v3h-1zM358 197h3v1h-3zM359 196h1v3h-1zM360 194h3v1h-3zM361 193h1v3h-1zM362 188h3v1h-3zM363 187h1v3h-1zM364 180h3v1h-3zM365 179h1v3h-1zM366 163h3v1h-3zM367 162h1v3h-1z" fill="#0000ff"/>
<text x="31.5" y="38" fill="#ffff80" font-family="Liberation Sans, sans-serif" font-weight="bold" font-size="12.5" text-anchor="end" textLength="20.3" lengthAdjust="spacingAndGlyphs" xml:space="preserve">760</text>
<text x="31.5" y="67" fill="#ffff80" font-family="Liberation Sans, sans-serif" font-weight="bold" font-size="12.5" text-anchor="end" textLength="20.3" lengthAdjust="spacingAndGlyphs" xml:space="preserve">700</text>
<text x="31.5" y="113" fill="#ffff80" font-family="Liberation Sans, sans-serif" font-weight="bold" font-size="12.5" text-anchor="end" textLength="20.3" lengthAdjust="spacingAndGlyphs" xml:space="preserve">600</text>
<text x="31.5" y="158" fill="#ffff80" font-family="Liberation Sans, sans-serif" font-weight="bold" font-size="12.5" text-anchor="end" textLength="20.3" lengthAdjust="spacingAndGlyphs" xml:space="preserve">500</text>
<text x="31.5" y="203" fill="#ffff80" font-family="Liberation Sans, sans-serif" font-weight="bold" font-size="12.5" text-anchor="end" textLength="20.3" lengthAdjust="spacingAndGlyphs" xml:space="preserve">400</text>
<text x="31.5" y="250" fill="#ffff80" font-family="Liberation Sans, sans-serif" font-weight="bold" font-size="12.5" text-anchor="end" textLength="20.3" lengthAdjust="spacingAndGlyphs" xml:space="preserve">300</text>
<text x="31.5" y="296" fill="#ffff80" font-family="Liberation Sans, sans-serif" font-weight="bold" font-size="12.5" text-anchor="end" textLength="20.3" lengthAdjust="spacingAndGlyphs" xml:space="preserve">200</text>
<text x="31.5" y="341" fill="#ffff80" font-family="Liberation Sans, sans-serif" font-weight="bold" font-size="12.5" text-anchor="end" textLength="20.3" lengthAdjust="spacingAndGlyphs" xml:space="preserve">100</text>
<text x="5.5" y="52" fill="#ffff80" font-family="Liberation Sans, sans-serif" font-weight="bold" font-size="12.5" textLength="15.6" lengthAdjust="spacingAndGlyphs" xml:space="preserve">km</text>
<text x="38" y="356" fill="#ffff80" font-family="Liberation Sans, sans-serif" font-weight="bold" font-size="12.5" text-anchor="middle" xml:space="preserve">1</text>
<text x="78" y="356" fill="#ffff80" font-family="Liberation Sans, sans-serif" font-weight="bold" font-size="12.5" text-anchor="middle" xml:space="preserve">2</text>
<text x="117" y="356" fill="#ffff80" font-family="Liberation Sans, sans-serif" font-weight="bold" font-size="12.5" text-anchor="middle" xml:space="preserve">3</text>
<text x="157" y="356" fill="#ffff80" font-family="Liberation Sans, sans-serif" font-weight="bold" font-size="12.5" text-anchor="middle" xml:space="preserve">4</text>
<text x="197" y="356" fill="#ffff80" font-family="Liberation Sans, sans-serif" font-weight="bold" font-size="12.5" text-anchor="middle" xml:space="preserve">5</text>
<text x="237" y="356" fill="#ffff80" font-family="Liberation Sans, sans-serif" font-weight="bold" font-size="12.5" text-anchor="middle" xml:space="preserve">6</text>
<text x="276" y="356" fill="#ffff80" font-family="Liberation Sans, sans-serif" font-weight="bold" font-size="12.5" text-anchor="middle" xml:space="preserve">7</text>
<text x="316" y="356" fill="#ffff80" font-family="Liberation Sans, sans-serif" font-weight="bold" font-size="12.5" text-anchor="middle" xml:space="preserve">8</text>
<text x="356" y="356" fill="#ffff80" font-family="Liberation Sans, sans-serif" font-weight="bold" font-size="12.5" text-anchor="middle" xml:space="preserve">9</text>
<text x="396.5" y="356" fill="#ffff80" font-family="Liberation Sans, sans-serif" font-weight="bold" font-size="12.5" text-anchor="middle" textLength="13" lengthAdjust="spacingAndGlyphs" xml:space="preserve">10</text>
<text x="435.5" y="356" fill="#ffff80" font-family="Liberation Sans, sans-serif" font-weight="bold" font-size="12.5" text-anchor="middle" textLength="13" lengthAdjust="spacingAndGlyphs" xml:space="preserve">11</text>
<text x="475.5" y="356" fill="#ffff80" font-family="Liberation Sans, sans-serif" font-weight="bold" font-size="12.5" text-anchor="middle" textLength="13" lengthAdjust="spacingAndGlyphs" xml:space="preserve">12</text>
<text x="515.5" y="356" fill="#ffff80" font-family="Liberation Sans, sans-serif" font-weight="bold" font-size="12.5" text-anchor="middle" textLength="13" lengthAdjust="spacingAndGlyphs" xml:space="preserve">13</text>
<text x="555.5" y="356" fill="#ffff80" font-family="Liberation Sans, sans-serif" font-weight="bold" font-size="12.5" text-anchor="middle" textLength="13" lengthAdjust="spacingAndGlyphs" xml:space="preserve">14</text>
<text x="594.5" y="356" fill="#ffff80" font-family="Liberation Sans, sans-serif" font-weight="bold" font-size="12.5" text-anchor="middle" textLength="13" lengthAdjust="spacingAndGlyphs" xml:space="preserve">15</text>
<text x="634.5" y="356" fill="#ffff80" font-family="Liberation Sans, sans-serif" font-weight="bold" font-size="12.5" text-anchor="middle" textLength="13" lengthAdjust="spacingAndGlyphs" xml:space="preserve">16</text>
<text x="674.5" y="356" fill="#ffff80" font-family="Liberation Sans, sans-serif" font-weight="bold" font-size="12.5" text-anchor="middle" textLength="13" lengthAdjust="spacingAndGlyphs" xml:space="preserve">17</text>
<text x="714.5" y="356" fill="#ffff80" font-family="Liberation Sans, sans-serif" font-weight="bold" font-size="12.5" text-anchor="middle" textLength="13" lengthAdjust="spacingAndGlyphs" xml:space="preserve">18</text>
<text x="684" y="361" fill="#ffff80" font-family="Liberation Sans, sans-serif" font-weight="bold" font-size="12.5" textLength="24" lengthAdjust="spacingAndGlyphs" xml:space="preserve">MHz</text>
</g>
<path d="M727 31h165v1h-165zM727 278h165v1h-165zM727 31h1v248h-1zM891 31h1v248h-1zM727 62h165v1h-165zM727 93h165v1h-165zM727 124h165v1h-165zM727 154h165v1h-165zM727 185h165v1h-165zM727 216h165v1h-165zM727 247h165v1h-165z" fill="#80ff80"/>
<rect x="812" y="63" width="1" height="215" fill="#00ff80"/>
<text x="752" y="52" fill="#ffff00" font-family="Liberation Sans, sans-serif" font-weight="bold" font-size="12.5" textLength="113" lengthAdjust="spacingAndGlyphs" xml:space="preserve">AUTOSCALA output</text>
<text x="732.7" y="83.2" fill="#fff" font-family="Liberation Sans, sans-serif" font-weight="bold" font-size="12.5" textLength="24.5" lengthAdjust="spacingAndGlyphs" xml:space="preserve">foF2</text>
<text x="835.7" y="83.2" fill="#fff" font-family="Liberation Sans, sans-serif" font-weight="bold" font-size="12.5" textLength="47.7" lengthAdjust="spacingAndGlyphs" xml:space="preserve">9.3 MHz</text>
<text x="732.7" y="114.2" fill="#ffff80" font-family="Liberation Sans, sans-serif" font-weight="bold" font-size="12.5" textLength="75.5" lengthAdjust="spacingAndGlyphs" xml:space="preserve">MUF(3000)F2</text>
<text x="827.9" y="114.2" fill="#ffff80" font-family="Liberation Sans, sans-serif" font-weight="bold" font-size="12.5" textLength="54.3" lengthAdjust="spacingAndGlyphs" xml:space="preserve">29.8 MHz</text>
<text x="732.7" y="145.2" fill="#ffff80" font-family="Liberation Sans, sans-serif" font-weight="bold" font-size="12.5" textLength="59.2" lengthAdjust="spacingAndGlyphs" xml:space="preserve">M(3000)F2</text>
<text x="836.1" y="145.2" fill="#ffff80" font-family="Liberation Sans, sans-serif" font-weight="bold" font-size="12.5" textLength="24.1" lengthAdjust="spacingAndGlyphs" xml:space="preserve">3.20</text>
<text x="732.7" y="175.2" fill="#ffff00" font-family="Liberation Sans, sans-serif" font-weight="bold" font-size="12.5" textLength="12.7" lengthAdjust="spacingAndGlyphs" xml:space="preserve">fxI</text>
<text x="828.2" y="175.2" fill="#ffff00" font-family="Liberation Sans, sans-serif" font-weight="bold" font-size="12.5" textLength="54.0" lengthAdjust="spacingAndGlyphs" xml:space="preserve">10.0 MHz</text>
<text x="732.7" y="206.2" fill="#ff0000" font-family="Liberation Sans, sans-serif" font-weight="bold" font-size="12.5" textLength="22.9" lengthAdjust="spacingAndGlyphs" xml:space="preserve">foF1</text>
<text x="836.1" y="206.2" fill="#ff0000" font-family="Liberation Sans, sans-serif" font-weight="bold" font-size="12.5" textLength="47.3" lengthAdjust="spacingAndGlyphs" xml:space="preserve">4.8 MHz</text>
<text x="732.7" y="237.2" fill="#0080ff" font-family="Liberation Sans, sans-serif" font-weight="bold" font-size="12.5" textLength="21.6" lengthAdjust="spacingAndGlyphs" xml:space="preserve">ftEs</text>
<text x="827.9" y="237.2" fill="#0080ff" font-family="Liberation Sans, sans-serif" font-weight="bold" font-size="12.5" textLength="16.6" lengthAdjust="spacingAndGlyphs" xml:space="preserve">NO</text>
<text x="732.7" y="268.2" fill="#ffff80" font-family="Liberation Sans, sans-serif" font-weight="bold" font-size="12.5" textLength="23.5" lengthAdjust="spacingAndGlyphs" xml:space="preserve">h'Es</text>
<text x="827.9" y="268.2" fill="#ffff80" font-family="Liberation Sans, sans-serif" font-weight="bold" font-size="12.5" textLength="16.6" lengthAdjust="spacingAndGlyphs" xml:space="preserve">NO</text>
<rect x="187" y="30" width="3" height="33" fill="#ff0000"/>
<text x="156" y="60" fill="#ff0000" font-family="Liberation Sans, sans-serif" font-weight="bold" font-size="12.5" textLength="23.4" lengthAdjust="spacingAndGlyphs" xml:space="preserve">foF1</text>
<rect x="366" y="30" width="3" height="33" fill="#fff"/>
<text x="338.8" y="60" fill="#fff" font-family="Liberation Sans, sans-serif" font-weight="bold" font-size="12.5" textLength="24.5" lengthAdjust="spacingAndGlyphs" xml:space="preserve">foF2</text>
<path d="M394 30h1v33h-1zM396 30h1v33h-1z" fill="#ffff00"/>
<text x="399" y="60" fill="#ffff00" font-family="Liberation Sans, sans-serif" font-weight="bold" font-size="12.5" textLength="12.3" lengthAdjust="spacingAndGlyphs" xml:space="preserve">fxI</text>
<g>
<path d="M61 397h1v1h-1zM72 458h1v2h-1zM64 493h1v1h-1zM64 461h1v2h-1zM268 405h1v1h-1zM195 427h1v1h-1zM75 462h1v1h-1zM65 460h1v1h-1zM207 414h1v2h-1zM223 456h1v2h-1zM247 428h1v2h-1zM198 446h1v1h-1zM125 419h1v1h-1zM69 461h1v1h-1zM183 451h1v1h-1zM235 445h1v1h-1zM204 397h1v1h-1zM180 441h1v1h-1zM242 431h1v1h-1zM220 397h1v1h-1zM176 462h1v1h-1zM264 399h1v1h-1zM64 481h1v1h-1zM214 461h1v2h-1zM121 479h1v2h-1zM276 473h1v1h-1zM205 402h1v2h-1zM64 415h1v1h-1zM238 419h1v2h-1zM149 499h1v2h-1zM69 409h1v1h-1zM275 405h1v2h-1zM270 458h1v1h-1zM229 441h1v1h-1zM223 436h1v1h-1zM173 494h1v1h-1zM193 428h1v1h-1zM225 497h1v1h-1zM165 499h1v2h-1zM97 396h1v2h-1zM272 414h1v2h-1zM80 402h1v2h-1zM85 401h1v1h-1zM171 494h1v1h-1zM181 390h1v1h-1zM184 434h1v1h-1zM225 457h1v1h-1zM243 455h1v1h-1zM213 498h1v1h-1zM227 496h1v1h-1zM181 434h1v1h-1zM140 486h1v1h-1zM185 457h1v1h-1zM211 416h1v1h-1zM255 418h1v2h-1zM238 490h1v1h-1zM236 391h1v1h-1zM251 423h1v2h-1zM137 445h1v1h-1zM279 466h1v1h-1zM213 398h1v1h-1zM281 437h1v1h-1zM211 430h1v1h-1zM254 480h1v2h-1zM70 480h1v1h-1zM200 447h1v1h-1zM205 493h1v2h-1zM217 432h1v1h-1zM189 458h1v1h-1zM54 389h1v1h-1zM183 483h1v1h-1zM160 499h1v1h-1zM260 499h1v1h-1zM262 404h1v1h-1zM281 482h1v1h-1zM278 446h1v2h-1zM260 452h1v1h-1zM185 407h1v1h-1zM272 444h1v1h-1zM204 388h1v1h-1zM234 403h1v1h-1zM191 449h1v1h-1zM275 459h1v1h-1zM246 400h1v2h-1zM192 391h1v1h-1zM226 423h1v2h-1zM179 456h1v1h-1zM227 454h1v1h-1zM192 413h1v2h-1zM220 426h1v1h-1zM278 487h1v1h-1zM232 470h1v1h-1zM85 420h1v2h-1zM105 483h1v1h-1zM219 494h1v1h-1zM90 478h1v2h-1zM180 439h1v1h-1zM72 480h1v1h-1zM53 431h1v2h-1zM229 390h1v2h-1zM180 396h1v1h-1zM250 417h1v1h-1zM280 487h1v1h-1zM118 484h1v1h-1zM258 442h1v1h-1zM180 461h1v2h-1zM228 429h1v1h-1zM120 395h1v1h-1zM53 469h1v1h-1zM254 421h1v1h-1zM204 497h1v1h-1zM66 421h1v2h-1zM51 431h1v2h-1zM183 478h1v1h-1zM95 413h1v1h-1zM184 485h1v1h-1zM53 481h1v1h-1zM180 448h1v1h-1zM215 443h1v2h-1zM188 494h1v2h-1zM274 478h1v1h-1zM152 432h1v1h-1zM52 397h1v1h-1zM219 495h1v2h-1zM271 452h1v1h-1zM202 419h1v1h-1zM142 430h1v1h-1zM111 392h1v1h-1zM72 421h1v1h-1zM184 497h1v1h-1zM217 479h1v2h-1zM244 429h1v2h-1zM213 406h1v1h-1zM260 494h1v2h-1zM236 477h1v1h-1zM281 455h1v1h-1zM260 475h1v1h-1zM212 434h1v1h-1zM145 494h1v2h-1zM191 394h1v1h-1zM209 456h1v1h-1zM253 396h1v1h-1zM217 455h1v1h-1zM239 482h1v2h-1zM113 491h1v1h-1zM265 421h1v1h-1zM235 484h1v1h-1zM108 482h1v2h-1zM175 496h1v2h-1zM68 449h1v1h-1zM245 393h1v1h-1zM68 464h1v1h-1zM226 426h1v1h-1zM230 454h1v1h-1zM79 458h1v1h-1zM128 398h1v1h-1zM178 445h1v2h-1zM72 406h1v1h-1zM210 453h1v1h-1zM276 402h1v1h-1zM108 451h1v2h-1zM126 481h1v1h-1zM79 495h1v1h-1zM49 429h1v2h-1zM79 413h1v1h-1zM148 499h1v1h-1zM267 394h1v1h-1zM75 394h1v1h-1zM211 407h1v1h-1zM97 486h1v1h-1zM249 442h1v1h-1zM256 485h1v2h-1zM282 458h1v1h-1zM233 398h1v1h-1zM236 440h1v2h-1zM206 484h1v1h-1zM213 499h1v1h-1zM173 394h1v1h-1zM238 471h1v1h-1zM79 409h1v1h-1zM102 452h1v2h-1zM189 416h1v2h-1zM281 430h1v2h-1zM191 399h1v1h-1zM194 413h1v1h-1zM240 499h1v2h-1zM241 395h1v2h-1zM120 461h1v1h-1zM224 452h1v1h-1zM72 422h1v2h-1zM128 496h1v1h-1zM81 392h1v2h-1zM199 450h1v1h-1zM67 438h1v2h-1zM163 419h1v1h-1zM223 401h1v2h-1zM70 458h1v1h-1zM49 488h1v1h-1zM108 460h1v1h-1zM81 468h1v1h-1zM184 469h1v2h-1zM227 485h1v1h-1zM198 412h1v2h-1zM115 416h1v1h-1zM51 456h1v1h-1zM166 423h1v1h-1zM112 391h1v1h-1zM275 474h1v2h-1zM57 477h1v1h-1zM232 441h1v1h-1zM223 438h1v1h-1zM50 490h1v1h-1zM238 496h1v1h-1zM101 451h1v1h-1zM245 492h1v1h-1zM243 425h1v1h-1zM208 451h1v1h-1zM278 416h1v2h-1zM201 406h1v2h-1zM201 406h1v2h-1zM62 478h1v1h-1zM231 428h1v1h-1zM96 471h1v2h-1zM57 427h1v2h-1zM263 435h1v1h-1zM243 414h1v2h-1zM140 486h1v1h-1zM259 490h1v2h-1zM71 394h1v1h-1zM144 457h1v1h-1zM112 491h1v2h-1zM65 490h1v1h-1zM279 465h1v1h-1zM206 393h1v1h-1zM240 479h1v1h-1zM242 464h1v1h-1zM55 493h1v1h-1zM76 448h1v2h-1zM247 437h1v1h-1zM282 443h1v2h-1zM82 451h1v1h-1zM51 490h1v1h-1zM259 476h1v1h-1zM204 418h1v1h-1zM269 428h1v2h-1zM141 488h1v1h-1zM180 413h1v2h-1zM241 408h1v1h-1zM90 442h1v1h-1zM73 441h1v2h-1zM166 467h1v1h-1zM240 456h1v1h-1zM248 495h1v1h-1zM275 462h1v1h-1zM215 491h1v1h-1zM216 447h1v1h-1zM75 388h1v1h-1zM264 445h1v1h-1zM61 412h1v1h-1zM68 435h1v1h-1zM248 473h1v1h-1zM76 469h1v1h-1zM215 414h1v1h-1zM258 429h1v2h-1zM222 435h1v1h-1zM207 427h1v1h-1zM101 392h1v2h-1zM212 456h1v1h-1zM216 408h1v2h-1zM227 422h1v2h-1zM62 427h1v1h-1zM245 490h1v1h-1zM213 413h1v2h-1zM235 439h1v1h-1zM50 443h1v2h-1zM78 493h1v1h-1zM152 461h1v2h-1zM246 408h1v1h-1zM52 394h1v2h-1zM71 461h1v1h-1zM237 452h1v1h-1zM182 409h1v1h-1zM76 437h1v1h-1zM126 404h1v1h-1zM282 449h1v1h-1zM62 465h1v2h-1zM71 479h1v1h-1zM212 488h1v1h-1zM207 439h1v1h-1zM261 448h1v1h-1zM193 415h1v1h-1zM234 492h1v1h-1zM59 459h1v1h-1zM219 495h1v1h-1zM79 437h1v1h-1zM215 441h1v1h-1zM198 419h1v2h-1zM49 467h1v2h-1zM207 487h1v2h-1zM263 410h1v2h-1zM254 444h1v1h-1zM59 469h1v1h-1zM70 481h1v1h-1zM248 480h1v1h-1zM62 484h1v2h-1zM216 488h1v1h-1zM55 497h1v1h-1zM206 481h1v1h-1zM98 404h1v2h-1zM122 491h1v1h-1zM224 488h1v1h-1zM65 494h1v1h-1zM205 484h1v1h-1zM89 429h1v1h-1zM280 492h1v2h-1zM85 420h1v2h-1zM90 469h1v1h-1zM278 436h1v1h-1zM251 488h1v1h-1zM78 486h1v1h-1zM211 497h1v1h-1zM272 445h1v1h-1zM149 482h1v1h-1zM116 436h1v1h-1zM239 394h1v1h-1zM258 454h1v1h-1zM128 469h1v1h-1zM236 388h1v1h-1zM209 443h1v2h-1zM180 434h1v1h-1zM82 450h1v1h-1zM205 471h1v1h-1zM198 426h1v1h-1zM254 419h1v1h-1zM86 499h1v1h-1zM151 491h1v1h-1zM51 395h1v1h-1zM201 470h1v2h-1zM203 454h1v2h-1zM112 409h1v1h-1zM64 456h1v1h-1zM63 487h1v1h-1zM52 466h1v1h-1zM204 470h1v2h-1zM257 466h1v1h-1zM209 394h1v2h-1zM232 456h1v1h-1zM145 496h1v2h-1zM239 447h1v1h-1zM238 471h1v2h-1zM93 416h1v1h-1zM134 483h1v1h-1zM231 394h1v1h-1zM211 458h1v2h-1zM224 488h1v1h-1zM124 470h1v1h-1zM70 452h1v1h-1zM92 421h1v1h-1zM89 483h1v1h-1zM110 436h1v2h-1zM169 495h1v1h-1zM268 391h1v2h-1zM234 417h1v1h-1zM251 415h1v2h-1zM208 462h1v1h-1zM193 409h1v1h-1zM208 408h1v1h-1zM85 477h1v1h-1zM213 469h1v1h-1zM227 396h1v1h-1zM65 497h1v1h-1zM100 492h1v1h-1zM274 499h1v2h-1zM266 491h1v1h-1zM260 484h1v1h-1zM251 484h1v1h-1zM203 452h1v2h-1zM266 424h1v1h-1zM250 440h1v1h-1zM186 460h1v1h-1zM231 498h1v1h-1zM196 492h1v1h-1zM73 450h1v1h-1zM261 453h1v1h-1zM196 408h1v1h-1zM257 415h1v1h-1zM211 486h1v1h-1zM174 488h1v1h-1zM209 429h1v1h-1zM73 439h1v1h-1zM279 457h1v1h-1zM242 476h1v1h-1zM88 499h1v2h-1zM218 458h1v1h-1zM246 420h1v1h-1zM81 430h1v1h-1zM242 478h1v1h-1zM234 407h1v1h-1zM234 429h1v1h-1zM97 421h1v1h-1zM147 407h1v1h-1zM236 426h1v2h-1zM282 401h1v1h-1zM52 439h1v2h-1zM226 416h1v1h-1zM203 482h1v2h-1zM50 482h1v1h-1zM281 497h1v2h-1zM228 461h1v2h-1zM265 417h1v1h-1zM222 411h1v1h-1zM209 477h1v1h-1zM278 441h1v1h-1zM249 439h1v1h-1zM113 496h1v2h-1zM268 440h1v1h-1zM277 471h1v1h-1zM248 389h1v2h-1zM261 450h1v1h-1zM58 420h1v1h-1zM232 488h1v1h-1zM181 432h1v1h-1zM265 461h1v2h-1zM187 414h1v2h-1zM180 390h1v1h-1zM182 431h1v2h-1zM238 446h1v1h-1zM224 411h1v2h-1zM180 485h1v1h-1zM235 466h1v1h-1zM212 395h1v1h-1zM52 397h1v2h-1zM209 477h1v1h-1zM197 421h1v1h-1zM183 416h1v2h-1zM247 396h1v1h-1zM106 492h1v1h-1zM258 489h1v2h-1zM215 404h1v2h-1zM139 488h1v1h-1zM117 478h1v2h-1zM224 420h1v2h-1zM222 411h1v2h-1zM49 491h1v1h-1zM208 469h1v1h-1zM217 434h1v1h-1zM126 497h1v2h-1zM63 398h1v1h-1zM249 405h1v1h-1zM211 462h1v1h-1zM217 389h1v1h-1zM67 471h1v1h-1zM85 497h1v1h-1zM96 487h1v2h-1zM137 488h1v1h-1zM102 439h1v1h-1zM205 476h1v1h-1zM220 458h1v1h-1zM184 398h1v2h-1zM220 402h1v1h-1zM84 448h1v1h-1zM172 447h1v2h-1zM202 498h1v1h-1zM90 495h1v1h-1zM219 425h1v2h-1zM222 397h1v1h-1zM212 434h1v1h-1zM54 466h1v1h-1zM223 482h1v1h-1zM256 400h1v2h-1zM173 484h1v1h-1zM57 415h1v1h-1zM135 400h1v1h-1zM190 486h1v1h-1zM118 499h1v1h-1zM231 426h1v1h-1zM199 469h1v1h-1zM249 393h1v2h-1zM234 458h1v2h-1zM188 461h1v1h-1zM60 412h1v2h-1zM204 486h1v1h-1zM250 452h1v2h-1zM206 406h1v1h-1zM74 472h1v1h-1zM271 392h1v2h-1zM247 400h1v1h-1zM143 499h1v1h-1zM250 427h1v1h-1zM269 426h1v1h-1zM282 394h1v2h-1zM194 454h1v1h-1zM260 403h1v2h-1zM196 477h1v2h-1zM217 407h1v2h-1zM246 440h1v1h-1zM70 470h1v2h-1zM220 403h1v1h-1zM104 499h1v1h-1zM233 460h1v1h-1zM164 481h1v1h-1zM61 434h1v1h-1zM235 485h1v1h-1zM276 420h1v1h-1zM232 392h1v1h-1zM64 389h1v1h-1zM202 409h1v2h-1zM204 395h1v1h-1zM253 402h1v1h-1zM214 408h1v2h-1zM164 422h1v1h-1zM215 478h1v1h-1zM271 465h1v1h-1zM261 407h1v1h-1zM198 442h1v1h-1zM203 486h1v1h-1zM255 445h1v1h-1zM225 388h1v1h-1zM199 492h1v1h-1zM122 494h1v1h-1zM256 499h1v1h-1zM119 496h1v2h-1zM190 450h1v2h-1zM100 488h1v1h-1zM251 437h1v2h-1zM187 399h1v1h-1zM246 396h1v1h-1zM115 494h1v1h-1zM95 491h1v1h-1zM152 487h1v1h-1zM112 393h1v2h-1zM144 498h1v1h-1zM204 390h1v1h-1zM57 414h1v2h-1zM199 460h1v1h-1zM115 487h1v1h-1zM158 400h1v1h-1zM114 495h1v1h-1zM135 413h1v2h-1zM191 435h1v2h-1zM173 496h1v1h-1zM269 464h1v2h-1zM79 478h1v1h-1zM213 399h1v2h-1zM95 445h1v1h-1zM109 480h1v1h-1zM93 392h1v1h-1zM64 458h1v1h-1zM263 394h1v1h-1zM250 453h1v2h-1zM242 388h1v1h-1zM222 483h1v1h-1zM199 463h1v2h-1zM243 471h1v1h-1zM255 406h1v1h-1zM168 479h1v1h-1zM253 392h1v1h-1zM262 416h1v1h-1zM207 498h1v1h-1zM276 483h1v1h-1zM248 445h1v1h-1zM147 495h1v1h-1zM209 397h1v2h-1zM135 429h1v2h-1zM78 468h1v1h-1zM63 411h1v1h-1zM161 499h1v1h-1zM263 425h1v1h-1zM254 409h1v1h-1zM280 449h1v1h-1zM278 488h1v1h-1zM192 449h1v1h-1zM79 420h1v1h-1zM159 421h1v1h-1zM278 408h1v1h-1zM262 480h1v1h-1zM85 469h1v1h-1zM162 491h1v1h-1zM251 494h1v1h-1zM282 440h1v1h-1zM264 411h1v1h-1zM231 410h1v1h-1zM202 398h1v1h-1zM276 465h1v2h-1zM243 423h1v1h-1zM230 468h1v1h-1zM198 427h1v1h-1zM51 396h1v2h-1zM264 480h1v1h-1zM181 491h1v1h-1zM134 424h1v2h-1zM72 389h1v2h-1zM83 499h1v1h-1zM50 433h1v2h-1zM181 397h1v1h-1zM140 479h1v1h-1zM258 494h1v1h-1zM248 479h1v2h-1zM196 484h1v1h-1zM123 499h1v1h-1zM236 451h1v2h-1zM180 391h1v1h-1zM54 419h1v1h-1zM207 411h1v1h-1zM258 391h1v1h-1zM73 477h1v1h-1zM115 390h1v2h-1zM182 418h1v2h-1zM75 432h1v1h-1zM107 498h1v1h-1zM240 438h1v1h-1zM260 390h1v2h-1zM226 441h1v1h-1zM134 479h1v2h-1zM264 460h1v1h-1zM257 439h1v1h-1zM223 433h1v1h-1zM271 442h1v1h-1zM66 429h1v1h-1zM150 487h1v2h-1zM211 393h1v1h-1zM57 498h1v1h-1zM222 467h1v1h-1zM209 457h1v1h-1zM208 400h1v1h-1zM80 454h1v1h-1zM160 418h1v1h-1zM180 422h1v1h-1zM82 425h1v1h-1zM238 457h1v1h-1zM263 446h1v1h-1zM215 437h1v1h-1zM189 478h1v1h-1zM171 448h1v1h-1zM180 457h1v2h-1zM198 438h1v1h-1zM139 408h1v1h-1zM118 424h1v1h-1zM272 432h1v2h-1zM217 395h1v2h-1zM262 444h1v1h-1zM237 485h1v1h-1zM182 416h1v1h-1zM84 474h1v1h-1zM206 466h1v1h-1zM259 495h1v1h-1zM238 497h1v2h-1zM117 488h1v1h-1zM154 499h1v1h-1zM50 440h1v1h-1zM176 438h1v1h-1zM155 496h1v1h-1zM272 467h1v1h-1zM146 497h1v2h-1zM226 446h1v1h-1zM234 433h1v1h-1zM201 437h1v1h-1zM50 488h1v2h-1zM186 426h1v1h-1zM108 399h1v1h-1zM131 495h1v1h-1zM132 414h1v1h-1zM278 451h1v1h-1zM186 487h1v1h-1zM186 467h1v2h-1zM181 493h1v2h-1zM201 474h1v1h-1zM183 417h1v1h-1zM215 459h1v1h-1zM274 412h1v2h-1zM208 463h1v1h-1zM226 455h1v1h-1zM68 493h1v1h-1zM180 410h1v1h-1zM216 425h1v1h-1zM259 453h1v2h-1zM210 408h1v1h-1zM257 453h1v1h-1zM64 468h1v1h-1zM139 460h1v1h-1zM226 440h1v1h-1zM250 388h1v1h-1zM230 476h1v1h-1zM126 438h1v1h-1zM220 391h1v1h-1zM194 422h1v1h-1zM196 413h1v2h-1zM203 403h1v1h-1zM253 395h1v1h-1zM224 486h1v1h-1zM85 479h1v1h-1zM280 462h1v1h-1zM276 438h1v1h-1zM199 497h1v1h-1zM129 388h1v2h-1zM276 451h1v1h-1zM232 462h1v1h-1zM231 450h1v1h-1zM251 499h1v1h-1zM274 425h1v2h-1zM192 434h1v1h-1zM134 456h1v1h-1zM80 442h1v1h-1zM190 419h1v2h-1zM219 391h1v1h-1zM255 407h1v1h-1zM229 404h1v1h-1zM250 404h1v2h-1zM168 495h1v1h-1zM233 439h1v2h-1zM210 462h1v1h-1zM107 497h1v2h-1zM221 404h1v1h-1zM201 444h1v1h-1zM185 419h1v2h-1zM204 453h1v1h-1zM81 499h1v1h-1zM222 453h1v1h-1zM187 497h1v1h-1zM237 486h1v2h-1zM56 472h1v1h-1zM71 476h1v1h-1zM247 496h1v1h-1zM76 396h1v1h-1zM255 452h1v1h-1zM258 479h1v2h-1zM281 447h1v1h-1zM222 490h1v1h-1zM278 440h1v1h-1zM217 478h1v2h-1zM112 496h1v2h-1zM204 481h1v1h-1zM231 474h1v1h-1zM190 427h1v1h-1zM193 495h1v1h-1zM194 451h1v1h-1zM244 487h1v1h-1zM279 393h1v1h-1zM251 428h1v1h-1zM247 432h1v1h-1zM240 466h1v1h-1zM157 444h1v2h-1zM265 487h1v1h-1zM174 485h1v1h-1zM60 477h1v1h-1zM248 469h1v1h-1zM188 421h1v1h-1zM229 450h1v2h-1zM109 478h1v1h-1zM50 453h1v2h-1zM83 470h1v1h-1zM227 426h1v1h-1zM275 478h1v1h-1zM199 460h1v1h-1zM134 468h1v2h-1zM243 409h1v1h-1zM202 447h1v2h-1zM261 414h1v1h-1zM225 425h1v1h-1zM77 477h1v1h-1z" fill="#5e5e5e"/>
<path d="M184 398h1v2h-1zM184 485h1v1h-1zM148 499h1v1h-1zM198 426h1v1h-1zM102 439h1v1h-1zM188 461h1v1h-1zM202 398h1v1h-1zM100 492h1v1h-1zM198 419h1v2h-1zM282 458h1v1h-1zM278 488h1v1h-1zM262 404h1v1h-1z" fill="#aaa"/>
<path d="M62 415h1v1h-1zM57 417h1v1h-1zM56 489h1v1h-1zM56 490h1v1h-1zM124 497h1v1h-1zM183 498h1v1h-1zM50 496h1v1h-1zM50 497h1v1h-1zM50 498h1v1h-1zM50 499h1v1h-1zM50 500h1v1h-1zM51 496h1v1h-1zM51 499h1v1h-1zM51 500h1v1h-1zM51 495h1v1h-1zM66 496h1v1h-1zM66 497h1v1h-1zM68 497h1v1h-1zM70 496h1v1h-1zM70 495h1v1h-1zM74 495h1v1h-1zM75 496h1v1h-1zM75 495h1v1h-1zM77 496h1v1h-1zM77 495h1v1h-1zM78 495h1v1h-1zM80 494h1v1h-1zM80 495h1v1h-1zM88 477h1v1h-1zM88 478h1v1h-1zM91 478h1v1h-1zM97 473h1v1h-1zM97 474h1v1h-1zM98 472h1v1h-1zM98 473h1v1h-1zM99 471h1v1h-1zM101 469h1v1h-1zM101 470h1v1h-1zM101 471h1v1h-1zM102 470h1v1h-1zM102 471h1v1h-1zM104 469h1v1h-1zM104 470h1v1h-1zM110 467h1v1h-1zM110 468h1v1h-1zM111 468h1v1h-1zM112 466h1v1h-1zM112 467h1v1h-1zM112 468h1v1h-1zM114 466h1v1h-1zM114 467h1v1h-1zM114 468h1v1h-1zM116 467h1v1h-1zM116 468h1v1h-1zM118 466h1v1h-1zM118 467h1v1h-1zM118 468h1v1h-1zM117 465h1v1h-1zM120 465h1v1h-1zM120 466h1v1h-1zM120 467h1v1h-1zM122 467h1v1h-1zM119 458h1v1h-1zM119 459h1v1h-1zM119 462h1v1h-1zM125 465h1v1h-1zM125 466h1v1h-1zM127 466h1v1h-1zM127 467h1v1h-1zM129 465h1v1h-1zM129 466h1v1h-1zM132 465h1v1h-1zM132 466h1v1h-1zM134 465h1v1h-1zM134 466h1v1h-1zM133 465h1v1h-1zM136 464h1v1h-1zM136 465h1v1h-1zM138 464h1v1h-1zM138 465h1v1h-1zM138 463h1v1h-1zM140 464h1v1h-1zM140 463h1v1h-1zM142 464h1v1h-1zM142 462h1v1h-1zM142 463h1v1h-1zM144 462h1v1h-1zM144 463h1v1h-1zM144 464h1v1h-1zM144 409h1v1h-1zM144 410h1v1h-1zM145 409h1v1h-1zM145 461h1v1h-1zM146 464h1v1h-1zM146 462h1v1h-1zM146 463h1v1h-1zM150 458h1v1h-1zM150 459h1v1h-1zM150 461h1v1h-1zM150 462h1v1h-1zM150 463h1v1h-1zM150 404h1v1h-1zM150 405h1v1h-1zM152 458h1v1h-1zM152 460h1v1h-1zM152 461h1v1h-1zM152 462h1v1h-1zM154 456h1v1h-1zM154 460h1v1h-1zM154 461h1v1h-1zM154 455h1v1h-1zM156 453h1v1h-1zM156 460h1v1h-1zM156 461h1v1h-1zM156 454h1v1h-1zM158 458h1v1h-1zM158 459h1v1h-1zM158 460h1v1h-1zM160 457h1v1h-1zM160 458h1v1h-1zM161 456h1v1h-1zM161 457h1v1h-1zM161 458h1v1h-1zM161 445h1v1h-1zM161 446h1v1h-1zM162 456h1v1h-1zM162 457h1v1h-1zM162 442h1v1h-1zM162 443h1v1h-1zM162 444h1v1h-1zM163 455h1v1h-1zM163 456h1v1h-1zM163 439h1v1h-1zM163 440h1v1h-1zM163 441h1v1h-1zM164 454h1v1h-1zM164 455h1v1h-1zM164 433h1v1h-1zM164 434h1v1h-1zM164 435h1v1h-1zM166 390h1v1h-1zM166 453h1v1h-1zM166 454h1v1h-1zM166 391h1v1h-1zM168 388h1v1h-1zM168 450h1v1h-1zM168 451h1v1h-1zM168 387h1v1h-1zM169 448h1v1h-1zM169 449h1v1h-1zM169 450h1v1h-1zM170 448h1v1h-1zM170 445h1v1h-1zM170 446h1v1h-1zM170 447h1v1h-1zM171 443h1v1h-1zM171 444h1v1h-1zM172 441h1v1h-1zM173 432h1v1h-1zM173 433h1v1h-1zM173 434h1v1h-1zM173 437h1v1h-1zM173 438h1v1h-1zM174 427h1v1h-1zM174 430h1v1h-1zM174 431h1v1h-1zM147 460h1v1h-1zM147 461h1v1h-1zM148 460h1v1h-1zM153 456h1v1h-1zM153 457h1v1h-1zM155 454h1v1h-1zM155 455h1v1h-1zM157 453h1v1h-1zM157 454h1v1h-1zM159 450h1v1h-1zM159 451h1v1h-1zM167 388h1v1h-1zM167 389h1v1h-1zM167 390h1v1h-1z" fill="#fff"/>
<rect x="35.5" y="386.5" width="252" height="115" fill="none" stroke="#808080"/>
<text x="103.6" y="517" fill="#808080" stroke="#808080" font-family="Liberation Sans, sans-serif" font-size="12" stroke-width="0.25" paint-order="stroke" textLength="114.6" lengthAdjust="spacingAndGlyphs" xml:space="preserve">original ionogram resized</text>
</g>
<g>
<path d="M362 389h1v2h-1zM372 483h1v1h-1zM540 460h1v1h-1zM378 470h1v2h-1zM490 429h1v1h-1zM511 466h1v1h-1zM518 419h1v1h-1zM386 483h1v1h-1zM357 487h1v2h-1zM565 406h1v1h-1zM445 411h1v1h-1zM377 488h1v1h-1zM541 466h1v1h-1zM385 458h1v1h-1zM565 494h1v1h-1zM496 490h1v2h-1zM582 394h1v1h-1zM511 398h1v1h-1zM527 417h1v1h-1zM386 444h1v2h-1zM373 393h1v2h-1zM351 392h1v2h-1zM365 453h1v2h-1zM578 431h1v1h-1zM562 410h1v1h-1zM556 460h1v1h-1zM496 413h1v2h-1zM372 457h1v1h-1zM483 446h1v2h-1zM487 468h1v1h-1zM558 491h1v1h-1zM536 474h1v1h-1zM506 472h1v1h-1zM495 461h1v2h-1zM386 426h1v1h-1zM568 412h1v1h-1zM524 482h1v2h-1zM527 398h1v1h-1zM520 462h1v1h-1zM493 462h1v2h-1zM409 411h1v1h-1zM491 483h1v1h-1zM407 498h1v1h-1zM517 400h1v1h-1zM486 473h1v1h-1zM532 450h1v1h-1zM492 446h1v1h-1zM489 461h1v1h-1zM539 453h1v1h-1zM568 440h1v1h-1zM555 444h1v1h-1zM572 452h1v1h-1zM511 480h1v1h-1zM468 494h1v2h-1zM490 409h1v1h-1zM495 448h1v1h-1zM386 435h1v1h-1zM361 389h1v1h-1zM385 442h1v1h-1zM510 499h1v1h-1zM495 402h1v1h-1zM438 490h1v1h-1zM562 420h1v1h-1zM485 433h1v2h-1zM362 492h1v1h-1zM376 433h1v1h-1zM359 474h1v1h-1zM465 390h1v2h-1zM380 489h1v1h-1zM425 499h1v2h-1zM565 406h1v1h-1zM488 476h1v1h-1zM574 392h1v1h-1zM370 411h1v2h-1zM566 448h1v1h-1zM528 496h1v2h-1zM451 417h1v1h-1zM443 481h1v2h-1zM499 449h1v1h-1zM575 465h1v1h-1zM512 406h1v1h-1zM497 455h1v1h-1zM529 392h1v1h-1zM574 413h1v2h-1zM513 461h1v1h-1zM443 489h1v1h-1zM554 489h1v1h-1zM574 489h1v1h-1zM525 397h1v1h-1zM546 431h1v1h-1zM481 497h1v1h-1zM440 499h1v2h-1zM522 429h1v2h-1zM479 435h1v1h-1zM352 499h1v2h-1zM548 426h1v1h-1zM501 396h1v1h-1zM428 480h1v1h-1zM415 481h1v1h-1zM369 412h1v1h-1zM500 410h1v1h-1zM499 433h1v2h-1zM442 487h1v2h-1zM535 499h1v1h-1zM565 450h1v1h-1zM581 410h1v1h-1zM580 420h1v1h-1zM545 409h1v1h-1zM411 478h1v1h-1zM412 481h1v1h-1zM384 464h1v1h-1zM371 397h1v1h-1zM535 405h1v1h-1zM575 389h1v1h-1zM573 483h1v1h-1zM517 450h1v2h-1zM507 474h1v1h-1zM395 395h1v1h-1zM373 468h1v1h-1zM549 451h1v2h-1zM416 447h1v1h-1zM532 480h1v1h-1zM566 399h1v1h-1zM559 434h1v2h-1zM572 459h1v1h-1zM519 465h1v1h-1zM409 482h1v1h-1zM559 479h1v2h-1zM546 392h1v1h-1zM517 486h1v2h-1zM494 423h1v1h-1zM484 455h1v1h-1zM549 434h1v1h-1zM511 417h1v2h-1zM544 399h1v1h-1zM510 405h1v1h-1zM366 457h1v1h-1zM493 487h1v1h-1zM389 410h1v1h-1zM486 391h1v1h-1zM550 478h1v1h-1zM464 498h1v2h-1zM405 469h1v2h-1zM582 391h1v1h-1zM519 481h1v1h-1zM367 491h1v2h-1zM523 498h1v1h-1zM366 417h1v2h-1zM583 436h1v1h-1zM532 443h1v1h-1zM545 442h1v1h-1zM496 489h1v1h-1zM473 498h1v1h-1zM543 405h1v1h-1zM475 499h1v1h-1zM503 445h1v1h-1zM499 394h1v1h-1zM568 482h1v1h-1zM362 487h1v2h-1zM397 443h1v1h-1zM526 391h1v1h-1zM521 479h1v2h-1zM576 430h1v1h-1zM500 418h1v1h-1zM553 468h1v1h-1zM360 405h1v1h-1zM498 443h1v1h-1zM537 390h1v1h-1zM579 428h1v1h-1zM575 402h1v1h-1zM489 406h1v1h-1zM486 433h1v2h-1zM370 432h1v1h-1zM538 397h1v1h-1zM531 410h1v1h-1zM362 413h1v2h-1zM553 459h1v1h-1zM361 471h1v2h-1zM490 424h1v1h-1zM527 440h1v1h-1zM458 437h1v2h-1zM545 437h1v2h-1zM556 406h1v1h-1zM447 418h1v1h-1zM373 495h1v1h-1zM583 479h1v1h-1zM526 470h1v2h-1zM491 473h1v1h-1zM542 470h1v2h-1zM448 418h1v2h-1zM441 479h1v1h-1zM519 474h1v1h-1zM369 468h1v1h-1zM507 485h1v1h-1zM418 495h1v2h-1zM570 480h1v1h-1zM484 463h1v2h-1zM497 416h1v1h-1zM367 484h1v1h-1zM485 414h1v1h-1zM559 434h1v1h-1zM523 410h1v1h-1zM561 472h1v2h-1zM396 469h1v1h-1zM572 492h1v2h-1zM442 472h1v1h-1zM452 425h1v1h-1zM555 410h1v1h-1zM352 475h1v1h-1zM438 490h1v2h-1zM351 461h1v1h-1zM365 463h1v1h-1zM429 479h1v1h-1zM564 444h1v1h-1zM485 469h1v2h-1zM570 399h1v1h-1zM383 442h1v1h-1zM509 487h1v1h-1zM362 479h1v2h-1zM543 425h1v2h-1zM568 462h1v1h-1zM509 412h1v1h-1zM367 473h1v1h-1zM435 498h1v1h-1zM371 484h1v2h-1zM357 401h1v2h-1zM469 477h1v2h-1zM472 410h1v2h-1zM543 493h1v1h-1zM522 417h1v1h-1zM525 425h1v1h-1zM547 437h1v2h-1zM370 461h1v1h-1zM377 451h1v1h-1zM568 484h1v1h-1zM495 446h1v1h-1zM561 475h1v1h-1zM533 430h1v2h-1zM571 395h1v2h-1zM566 462h1v1h-1zM455 492h1v1h-1zM574 468h1v1h-1zM352 411h1v1h-1zM484 421h1v1h-1zM570 426h1v2h-1zM448 490h1v2h-1zM570 457h1v1h-1zM500 406h1v1h-1zM556 431h1v1h-1zM467 478h1v1h-1zM537 428h1v1h-1zM487 396h1v2h-1zM495 493h1v1h-1zM404 490h1v2h-1zM454 481h1v2h-1zM462 497h1v1h-1zM363 405h1v1h-1zM559 464h1v2h-1zM397 389h1v1h-1zM523 483h1v1h-1zM556 415h1v1h-1zM388 487h1v1h-1zM483 400h1v2h-1zM375 413h1v1h-1zM416 478h1v2h-1zM526 442h1v1h-1zM573 395h1v1h-1zM361 408h1v1h-1zM545 417h1v1h-1zM531 459h1v1h-1zM566 415h1v1h-1zM555 473h1v1h-1zM518 457h1v1h-1zM404 471h1v1h-1zM543 488h1v2h-1zM578 399h1v1h-1zM475 423h1v1h-1zM547 485h1v1h-1zM499 426h1v1h-1zM499 464h1v1h-1zM563 426h1v1h-1zM536 459h1v2h-1zM375 483h1v1h-1zM552 408h1v2h-1zM482 462h1v1h-1zM457 461h1v1h-1zM446 481h1v1h-1zM516 499h1v2h-1zM381 429h1v1h-1zM496 456h1v1h-1zM403 404h1v1h-1zM578 400h1v1h-1zM378 394h1v1h-1zM527 483h1v1h-1zM373 484h1v1h-1zM390 495h1v1h-1zM358 442h1v1h-1zM425 460h1v1h-1zM520 462h1v1h-1zM551 453h1v1h-1zM561 419h1v1h-1zM504 431h1v1h-1zM361 415h1v1h-1zM559 426h1v1h-1zM372 491h1v2h-1zM502 411h1v1h-1zM432 440h1v1h-1zM373 488h1v1h-1zM388 481h1v1h-1zM389 490h1v1h-1zM548 405h1v1h-1zM532 396h1v1h-1zM553 449h1v1h-1zM583 396h1v1h-1zM401 498h1v1h-1zM567 434h1v2h-1zM374 471h1v1h-1zM500 408h1v2h-1zM523 486h1v2h-1zM385 421h1v1h-1zM582 394h1v2h-1zM564 488h1v1h-1zM462 437h1v1h-1zM542 463h1v1h-1zM368 488h1v1h-1zM543 495h1v1h-1zM494 418h1v2h-1zM498 475h1v1h-1zM451 472h1v1h-1zM562 436h1v2h-1zM373 417h1v1h-1zM520 464h1v2h-1zM553 427h1v1h-1zM379 491h1v2h-1zM567 447h1v1h-1zM557 418h1v1h-1zM447 493h1v1h-1zM440 492h1v2h-1zM575 452h1v1h-1zM570 494h1v1h-1zM569 410h1v1h-1zM519 420h1v1h-1zM524 400h1v2h-1zM385 484h1v1h-1zM521 441h1v1h-1zM482 467h1v1h-1zM464 422h1v1h-1zM526 436h1v1h-1zM583 471h1v2h-1zM355 395h1v1h-1zM493 436h1v2h-1zM430 484h1v1h-1zM537 465h1v2h-1zM359 429h1v1h-1zM579 422h1v1h-1zM399 463h1v1h-1zM515 423h1v1h-1zM425 486h1v1h-1zM458 458h1v1h-1zM557 474h1v2h-1zM477 478h1v1h-1zM527 423h1v1h-1zM392 494h1v2h-1zM562 394h1v1h-1zM579 405h1v1h-1zM483 491h1v1h-1zM364 463h1v1h-1zM449 487h1v1h-1zM528 411h1v1h-1zM525 421h1v1h-1zM583 467h1v2h-1zM479 495h1v2h-1zM514 408h1v1h-1zM488 448h1v2h-1zM543 397h1v1h-1zM452 455h1v1h-1zM361 456h1v1h-1zM441 465h1v1h-1zM413 396h1v1h-1zM543 465h1v2h-1zM564 491h1v1h-1zM536 469h1v1h-1zM549 439h1v2h-1zM566 489h1v1h-1zM437 432h1v1h-1zM487 482h1v2h-1zM522 424h1v1h-1zM569 461h1v1h-1zM498 443h1v2h-1zM552 496h1v1h-1zM544 418h1v1h-1zM580 424h1v1h-1zM541 493h1v2h-1zM575 424h1v1h-1zM516 478h1v2h-1zM507 423h1v1h-1zM548 465h1v1h-1zM506 415h1v1h-1zM496 490h1v1h-1zM369 403h1v1h-1zM546 405h1v2h-1zM557 392h1v1h-1zM488 493h1v2h-1zM512 431h1v1h-1zM486 460h1v1h-1zM406 459h1v1h-1zM423 495h1v1h-1zM408 487h1v1h-1zM358 491h1v1h-1zM512 423h1v1h-1zM500 402h1v2h-1zM450 453h1v2h-1zM408 473h1v1h-1zM556 435h1v1h-1zM519 420h1v1h-1zM515 449h1v1h-1zM461 446h1v2h-1zM545 412h1v1h-1zM539 454h1v1h-1zM463 487h1v1h-1zM553 478h1v1h-1zM548 421h1v1h-1zM494 484h1v1h-1zM542 488h1v1h-1zM540 480h1v1h-1zM354 494h1v1h-1zM493 433h1v1h-1zM495 468h1v1h-1zM540 410h1v1h-1zM458 391h1v2h-1zM548 401h1v1h-1zM378 497h1v1h-1zM444 487h1v2h-1zM475 398h1v1h-1zM472 493h1v1h-1zM568 401h1v1h-1zM583 412h1v1h-1zM559 454h1v2h-1zM549 481h1v2h-1zM392 491h1v2h-1zM405 481h1v2h-1zM358 389h1v1h-1zM469 487h1v1h-1zM369 497h1v1h-1zM582 414h1v1h-1zM413 414h1v2h-1zM576 401h1v1h-1zM502 404h1v1h-1zM513 475h1v2h-1zM545 396h1v1h-1zM571 448h1v1h-1zM533 418h1v2h-1zM528 448h1v1h-1zM381 451h1v2h-1zM367 477h1v1h-1zM555 417h1v1h-1zM451 460h1v1h-1zM513 482h1v1h-1zM413 400h1v1h-1zM556 388h1v1h-1zM407 487h1v1h-1zM493 469h1v2h-1zM355 449h1v1h-1zM545 478h1v1h-1zM398 406h1v1h-1zM508 453h1v1h-1zM378 453h1v2h-1zM576 388h1v1h-1zM568 391h1v1h-1zM503 489h1v1h-1zM531 394h1v1h-1zM494 483h1v1h-1zM357 411h1v2h-1zM539 414h1v2h-1zM379 466h1v1h-1zM490 454h1v1h-1zM524 400h1v1h-1zM537 418h1v1h-1zM430 485h1v1h-1zM436 486h1v1h-1zM380 475h1v1h-1zM484 437h1v2h-1zM404 485h1v1h-1zM584 390h1v1h-1zM534 481h1v1h-1zM522 475h1v1h-1zM568 443h1v1h-1zM397 467h1v2h-1zM416 478h1v1h-1zM415 488h1v1h-1zM567 432h1v1h-1zM464 408h1v2h-1zM546 467h1v1h-1zM421 490h1v1h-1zM354 440h1v1h-1zM410 457h1v1h-1zM351 486h1v1h-1zM578 431h1v1h-1zM487 408h1v1h-1zM360 493h1v1h-1zM367 456h1v1h-1zM364 471h1v1h-1zM512 399h1v1h-1zM577 389h1v1h-1zM461 479h1v1h-1zM526 409h1v1h-1zM543 438h1v1h-1zM438 420h1v1h-1zM527 498h1v1h-1zM515 421h1v1h-1zM518 396h1v1h-1zM528 438h1v1h-1zM370 396h1v1h-1zM493 402h1v2h-1zM516 453h1v1h-1zM547 445h1v1h-1zM581 400h1v1h-1zM527 410h1v2h-1zM537 400h1v2h-1zM438 429h1v1h-1zM450 494h1v1h-1zM378 497h1v1h-1zM556 432h1v1h-1zM399 397h1v1h-1zM551 472h1v1h-1zM520 421h1v1h-1zM362 406h1v1h-1zM496 462h1v1h-1zM419 497h1v1h-1zM539 420h1v1h-1zM379 499h1v1h-1zM583 489h1v1h-1zM424 485h1v2h-1zM546 391h1v1h-1zM517 412h1v1h-1zM546 437h1v1h-1zM412 470h1v1h-1zM573 388h1v1h-1zM376 472h1v2h-1zM565 435h1v1h-1zM493 479h1v2h-1zM473 410h1v2h-1zM471 418h1v1h-1zM369 453h1v1h-1zM474 483h1v1h-1zM495 466h1v2h-1zM379 395h1v1h-1zM572 428h1v1h-1zM376 398h1v2h-1zM468 488h1v1h-1zM370 491h1v2h-1zM512 428h1v1h-1zM558 453h1v1h-1zM515 448h1v1h-1zM488 470h1v1h-1zM548 451h1v1h-1zM517 434h1v1h-1zM450 490h1v1h-1zM540 393h1v1h-1zM519 471h1v1h-1zM530 417h1v1h-1zM504 446h1v1h-1zM466 415h1v1h-1zM463 405h1v1h-1zM542 428h1v1h-1zM446 453h1v2h-1zM523 415h1v1h-1zM400 494h1v2h-1zM402 427h1v2h-1zM420 416h1v1h-1zM496 435h1v1h-1zM412 493h1v1h-1zM390 465h1v2h-1zM494 403h1v1h-1zM457 407h1v1h-1zM499 429h1v1h-1zM371 462h1v2h-1zM553 440h1v1h-1zM578 460h1v1h-1zM571 407h1v1h-1zM533 440h1v1h-1zM364 443h1v1h-1zM543 410h1v1h-1zM568 426h1v1h-1zM486 463h1v1h-1zM581 454h1v1h-1zM571 476h1v1h-1zM515 418h1v2h-1zM561 397h1v1h-1zM510 475h1v2h-1zM353 444h1v1h-1zM470 429h1v1h-1zM461 399h1v1h-1zM489 440h1v2h-1zM385 483h1v1h-1zM445 482h1v1h-1zM444 404h1v1h-1zM576 422h1v1h-1zM360 453h1v1h-1zM577 439h1v2h-1zM516 397h1v2h-1zM500 446h1v1h-1zM498 457h1v1h-1zM439 478h1v2h-1zM431 410h1v1h-1zM524 474h1v1h-1zM512 486h1v1h-1zM564 458h1v1h-1zM513 419h1v1h-1zM445 486h1v1h-1zM517 420h1v1h-1zM561 396h1v2h-1zM568 473h1v1h-1zM456 480h1v1h-1zM358 396h1v1h-1zM372 477h1v1h-1zM418 479h1v1h-1zM473 499h1v1h-1zM436 395h1v1h-1zM510 394h1v1h-1zM384 489h1v1h-1zM399 465h1v1h-1zM543 407h1v2h-1zM409 427h1v2h-1zM375 396h1v1h-1zM554 478h1v2h-1zM556 447h1v1h-1zM510 399h1v2h-1zM495 443h1v1h-1zM354 412h1v1h-1zM378 495h1v2h-1zM412 484h1v1h-1zM435 480h1v1h-1zM358 417h1v1h-1zM482 425h1v1h-1zM514 479h1v2h-1zM508 412h1v1h-1zM403 427h1v1h-1zM469 486h1v1h-1zM562 478h1v1h-1zM395 468h1v2h-1zM551 452h1v1h-1zM526 479h1v2h-1zM486 427h1v1h-1zM378 472h1v1h-1zM510 437h1v2h-1zM522 453h1v1h-1zM466 428h1v2h-1zM548 478h1v1h-1zM487 445h1v1h-1zM509 394h1v1h-1zM547 446h1v1h-1zM514 423h1v1h-1zM360 497h1v1h-1zM367 447h1v1h-1zM543 472h1v1h-1zM539 394h1v1h-1zM424 486h1v1h-1zM486 401h1v1h-1zM431 408h1v2h-1zM546 491h1v2h-1zM532 431h1v1h-1zM382 419h1v1h-1zM374 421h1v2h-1zM472 416h1v1h-1zM545 447h1v2h-1zM534 413h1v1h-1zM542 412h1v2h-1zM378 499h1v1h-1zM556 419h1v1h-1zM529 407h1v1h-1zM568 431h1v1h-1zM519 441h1v1h-1zM561 388h1v1h-1zM498 432h1v1h-1zM552 485h1v1h-1zM506 393h1v1h-1zM434 417h1v1h-1zM524 440h1v1h-1zM560 470h1v1h-1zM578 481h1v1h-1zM544 407h1v1h-1zM448 443h1v1h-1zM522 493h1v1h-1zM439 496h1v1h-1zM568 428h1v1h-1zM570 483h1v1h-1zM554 499h1v2h-1zM437 448h1v1h-1zM537 431h1v1h-1z" fill="#5e5e5e"/>
<path d="M462 497h1v1h-1zM376 433h1v1h-1zM442 487h1v2h-1zM532 480h1v1h-1zM567 447h1v1h-1zM496 413h1v2h-1zM370 461h1v1h-1zM413 396h1v1h-1zM574 392h1v1h-1zM354 412h1v1h-1zM425 499h1v2h-1z" fill="#aaa"/>
<path d="M364 415h1v1h-1zM359 417h1v1h-1zM358 489h1v1h-1zM358 490h1v1h-1zM426 497h1v1h-1zM485 498h1v1h-1zM352 496h1v1h-1zM352 497h1v1h-1zM352 498h1v1h-1zM352 499h1v1h-1zM352 500h1v1h-1zM353 496h1v1h-1zM353 499h1v1h-1zM353 500h1v1h-1zM353 495h1v1h-1zM368 496h1v1h-1zM368 497h1v1h-1zM370 497h1v1h-1zM372 496h1v1h-1zM372 495h1v1h-1zM376 495h1v1h-1zM377 496h1v1h-1zM377 495h1v1h-1zM379 496h1v1h-1zM379 495h1v1h-1zM380 495h1v1h-1zM382 494h1v1h-1zM382 495h1v1h-1zM390 477h1v1h-1zM390 478h1v1h-1zM393 478h1v1h-1zM399 473h1v1h-1zM399 474h1v1h-1zM400 472h1v1h-1zM400 473h1v1h-1zM401 471h1v1h-1zM403 469h1v1h-1zM403 470h1v1h-1zM403 471h1v1h-1zM404 470h1v1h-1zM404 471h1v1h-1zM406 469h1v1h-1zM406 470h1v1h-1zM412 467h1v1h-1zM412 468h1v1h-1zM413 468h1v1h-1zM414 466h1v1h-1zM414 467h1v1h-1zM414 468h1v1h-1zM416 466h1v1h-1zM416 467h1v1h-1zM416 468h1v1h-1zM418 467h1v1h-1zM418 468h1v1h-1zM420 466h1v1h-1zM420 467h1v1h-1zM420 468h1v1h-1zM419 465h1v1h-1zM422 465h1v1h-1zM422 466h1v1h-1zM422 467h1v1h-1zM424 467h1v1h-1zM421 458h1v1h-1zM421 459h1v1h-1zM421 462h1v1h-1zM427 465h1v1h-1zM427 466h1v1h-1zM429 466h1v1h-1zM429 467h1v1h-1zM431 465h1v1h-1zM431 466h1v1h-1zM434 465h1v1h-1zM434 466h1v1h-1zM436 465h1v1h-1zM436 466h1v1h-1zM435 465h1v1h-1zM438 464h1v1h-1zM438 465h1v1h-1zM440 464h1v1h-1zM440 465h1v1h-1zM440 463h1v1h-1zM442 464h1v1h-1zM442 463h1v1h-1zM444 464h1v1h-1zM444 462h1v1h-1zM444 463h1v1h-1zM446 462h1v1h-1zM446 463h1v1h-1zM446 464h1v1h-1zM446 409h1v1h-1zM446 410h1v1h-1zM447 409h1v1h-1zM447 461h1v1h-1zM448 464h1v1h-1zM448 462h1v1h-1zM448 463h1v1h-1zM452 458h1v1h-1zM452 459h1v1h-1zM452 461h1v1h-1zM452 462h1v1h-1zM452 463h1v1h-1zM452 404h1v1h-1zM452 405h1v1h-1zM454 458h1v1h-1zM454 460h1v1h-1zM454 461h1v1h-1zM454 462h1v1h-1zM456 456h1v1h-1zM456 460h1v1h-1zM456 461h1v1h-1zM456 455h1v1h-1zM458 453h1v1h-1zM458 460h1v1h-1zM458 461h1v1h-1zM458 454h1v1h-1zM460 458h1v1h-1zM460 459h1v1h-1zM460 460h1v1h-1zM462 457h1v1h-1zM462 458h1v1h-1zM463 456h1v1h-1zM463 457h1v1h-1zM463 458h1v1h-1zM463 445h1v1h-1zM463 446h1v1h-1zM464 456h1v1h-1zM464 457h1v1h-1zM464 442h1v1h-1zM464 443h1v1h-1zM464 444h1v1h-1zM465 455h1v1h-1zM465 456h1v1h-1zM465 439h1v1h-1zM465 440h1v1h-1zM465 441h1v1h-1zM466 454h1v1h-1zM466 455h1v1h-1zM466 433h1v1h-1zM466 434h1v1h-1zM466 435h1v1h-1zM468 390h1v1h-1zM468 453h1v1h-1zM468 454h1v1h-1zM468 391h1v1h-1zM470 388h1v1h-1zM470 450h1v1h-1zM470 451h1v1h-1zM470 387h1v1h-1zM471 448h1v1h-1zM471 449h1v1h-1zM471 450h1v1h-1zM472 448h1v1h-1zM472 445h1v1h-1zM472 446h1v1h-1zM472 447h1v1h-1zM473 443h1v1h-1zM473 444h1v1h-1zM474 441h1v1h-1zM475 432h1v1h-1zM475 433h1v1h-1zM475 434h1v1h-1zM475 437h1v1h-1zM475 438h1v1h-1zM476 427h1v1h-1zM476 430h1v1h-1zM476 431h1v1h-1zM449 460h1v1h-1zM449 461h1v1h-1zM450 460h1v1h-1zM455 456h1v1h-1zM455 457h1v1h-1zM457 454h1v1h-1zM457 455h1v1h-1zM459 453h1v1h-1zM459 454h1v1h-1zM461 450h1v1h-1zM461 451h1v1h-1zM469 388h1v1h-1zM469 389h1v1h-1zM469 390h1v1h-1z" fill="#fff"/>
<rect x="337.5" y="386.5" width="252" height="115" fill="none" stroke="#808080"/>
<text x="399" y="517" fill="#808080" stroke="#808080" font-family="Liberation Sans, sans-serif" font-size="12" stroke-width="0.25" paint-order="stroke" textLength="128.6" lengthAdjust="spacingAndGlyphs" xml:space="preserve">eliminate multiple reflections</text>
</g>
<g>
<path d="M781 482h1v1h-1zM704 498h1v2h-1zM817 439h1v1h-1zM859 449h1v2h-1zM733 469h1v2h-1zM735 432h1v1h-1zM843 499h1v1h-1zM800 401h1v1h-1zM879 473h1v1h-1zM746 472h1v1h-1zM821 460h1v1h-1zM772 463h1v1h-1zM837 404h1v2h-1zM677 411h1v1h-1zM679 416h1v1h-1zM710 434h1v2h-1zM694 436h1v1h-1zM738 453h1v1h-1zM779 457h1v1h-1zM825 499h1v1h-1zM808 436h1v1h-1zM700 390h1v1h-1zM876 460h1v1h-1zM659 452h1v1h-1zM784 447h1v1h-1zM690 407h1v1h-1zM762 405h1v1h-1zM808 423h1v1h-1zM761 415h1v2h-1zM667 399h1v1h-1zM885 479h1v1h-1zM845 488h1v1h-1zM791 420h1v1h-1zM786 493h1v1h-1zM877 413h1v1h-1zM845 447h1v1h-1zM723 495h1v2h-1zM654 444h1v1h-1zM883 489h1v2h-1zM690 428h1v1h-1zM793 431h1v2h-1zM850 480h1v1h-1zM758 433h1v1h-1zM733 408h1v2h-1zM734 403h1v1h-1zM760 449h1v2h-1zM704 448h1v1h-1zM841 442h1v1h-1zM744 478h1v2h-1zM819 407h1v2h-1zM875 494h1v1h-1zM664 496h1v2h-1zM744 453h1v2h-1zM795 471h1v1h-1zM829 406h1v1h-1zM827 497h1v2h-1zM856 429h1v1h-1zM741 490h1v1h-1zM794 458h1v2h-1zM820 411h1v1h-1zM683 405h1v1h-1zM811 429h1v2h-1zM787 390h1v1h-1zM794 456h1v1h-1zM817 449h1v1h-1zM809 460h1v1h-1zM658 435h1v1h-1zM746 491h1v1h-1zM780 408h1v2h-1zM669 482h1v1h-1zM668 443h1v1h-1zM690 458h1v1h-1zM851 407h1v2h-1zM868 412h1v1h-1zM845 451h1v2h-1zM762 399h1v1h-1zM806 404h1v1h-1zM835 476h1v1h-1zM700 413h1v1h-1zM746 403h1v2h-1zM660 474h1v1h-1zM696 411h1v1h-1zM814 482h1v1h-1zM768 455h1v1h-1zM854 444h1v1h-1zM769 444h1v1h-1zM823 438h1v1h-1zM874 394h1v1h-1zM781 410h1v1h-1zM830 470h1v1h-1zM782 490h1v1h-1zM870 490h1v1h-1zM760 478h1v1h-1zM799 436h1v2h-1zM739 449h1v1h-1zM885 415h1v1h-1zM802 476h1v1h-1zM735 470h1v1h-1zM859 466h1v1h-1zM694 461h1v2h-1zM724 497h1v1h-1zM779 494h1v1h-1zM692 442h1v2h-1zM886 425h1v2h-1zM834 388h1v1h-1zM804 487h1v1h-1zM680 436h1v1h-1zM809 499h1v2h-1zM767 480h1v1h-1zM674 481h1v2h-1zM820 435h1v1h-1zM663 451h1v1h-1zM708 396h1v1h-1zM854 435h1v1h-1zM784 452h1v2h-1zM850 461h1v1h-1zM770 470h1v2h-1zM828 477h1v2h-1zM684 393h1v1h-1zM861 474h1v1h-1zM667 465h1v1h-1zM744 469h1v1h-1zM720 492h1v1h-1zM674 496h1v1h-1zM709 447h1v1h-1zM840 425h1v1h-1zM869 465h1v1h-1zM688 470h1v1h-1zM819 411h1v1h-1zM711 448h1v1h-1zM718 421h1v1h-1zM851 396h1v2h-1zM790 467h1v2h-1zM774 491h1v1h-1zM828 395h1v2h-1zM864 455h1v1h-1zM720 408h1v1h-1zM795 428h1v2h-1zM881 409h1v1h-1zM884 448h1v2h-1zM780 422h1v1h-1zM795 451h1v1h-1zM695 431h1v1h-1zM751 402h1v1h-1zM738 437h1v1h-1zM734 486h1v1h-1zM726 446h1v1h-1zM874 473h1v1h-1zM746 412h1v1h-1zM729 478h1v1h-1zM835 463h1v1h-1zM672 414h1v1h-1zM846 495h1v1h-1zM825 402h1v1h-1zM679 412h1v1h-1zM722 394h1v1h-1zM725 428h1v1h-1zM785 441h1v1h-1zM885 478h1v1h-1zM657 461h1v1h-1zM699 494h1v1h-1zM680 414h1v1h-1zM803 482h1v1h-1zM826 437h1v2h-1zM832 391h1v1h-1zM806 494h1v2h-1zM682 494h1v1h-1zM785 406h1v2h-1zM747 499h1v1h-1zM660 394h1v2h-1z" fill="#666"/>
<path d="M850 480h1v1h-1zM885 415h1v1h-1z" fill="#aaa"/>
<path d="M667 415h1v1h-1zM662 417h1v1h-1zM661 489h1v1h-1zM661 490h1v1h-1zM729 497h1v1h-1zM788 498h1v1h-1zM655 496h1v1h-1zM655 497h1v1h-1zM655 498h1v1h-1zM655 499h1v1h-1zM655 500h1v1h-1zM656 496h1v1h-1zM656 499h1v1h-1zM656 500h1v1h-1zM656 495h1v1h-1zM671 496h1v1h-1zM671 497h1v1h-1zM673 497h1v1h-1zM675 496h1v1h-1zM675 495h1v1h-1zM679 495h1v1h-1zM680 496h1v1h-1zM680 495h1v1h-1zM682 496h1v1h-1zM682 495h1v1h-1zM683 495h1v1h-1zM685 494h1v1h-1zM685 495h1v1h-1zM693 477h1v1h-1zM693 478h1v1h-1zM696 478h1v1h-1zM702 473h1v1h-1zM702 474h1v1h-1zM703 472h1v1h-1zM703 473h1v1h-1zM704 471h1v1h-1zM706 469h1v1h-1zM706 470h1v1h-1zM706 471h1v1h-1zM707 470h1v1h-1zM707 471h1v1h-1zM709 469h1v1h-1zM709 470h1v1h-1zM715 467h1v1h-1zM715 468h1v1h-1zM716 468h1v1h-1zM717 466h1v1h-1zM717 467h1v1h-1zM717 468h1v1h-1zM719 466h1v1h-1zM719 467h1v1h-1zM719 468h1v1h-1zM721 467h1v1h-1zM721 468h1v1h-1zM723 466h1v1h-1zM723 467h1v1h-1zM723 468h1v1h-1zM722 465h1v1h-1zM725 465h1v1h-1zM725 466h1v1h-1zM725 467h1v1h-1zM727 467h1v1h-1zM724 458h1v1h-1zM724 459h1v1h-1zM724 462h1v1h-1zM730 465h1v1h-1zM730 466h1v1h-1zM732 466h1v1h-1zM732 467h1v1h-1zM734 465h1v1h-1zM734 466h1v1h-1zM737 465h1v1h-1zM737 466h1v1h-1zM739 465h1v1h-1zM739 466h1v1h-1zM738 465h1v1h-1zM741 464h1v1h-1zM741 465h1v1h-1zM743 464h1v1h-1zM743 465h1v1h-1zM743 463h1v1h-1zM745 464h1v1h-1zM745 463h1v1h-1zM747 464h1v1h-1zM747 462h1v1h-1zM747 463h1v1h-1zM749 462h1v1h-1zM749 463h1v1h-1zM749 464h1v1h-1zM749 409h1v1h-1zM749 410h1v1h-1zM750 409h1v1h-1zM750 461h1v1h-1zM751 464h1v1h-1zM751 462h1v1h-1zM751 463h1v1h-1zM755 458h1v1h-1zM755 459h1v1h-1zM755 461h1v1h-1zM755 462h1v1h-1zM755 463h1v1h-1zM755 404h1v1h-1zM755 405h1v1h-1zM757 458h1v1h-1zM757 460h1v1h-1zM757 461h1v1h-1zM757 462h1v1h-1zM759 456h1v1h-1zM759 460h1v1h-1zM759 461h1v1h-1zM759 455h1v1h-1zM761 453h1v1h-1zM761 460h1v1h-1zM761 461h1v1h-1zM761 454h1v1h-1zM763 458h1v1h-1zM763 459h1v1h-1zM763 460h1v1h-1zM765 457h1v1h-1zM765 458h1v1h-1zM766 456h1v1h-1zM766 457h1v1h-1zM766 458h1v1h-1zM766 445h1v1h-1zM766 446h1v1h-1zM767 456h1v1h-1zM767 457h1v1h-1zM767 442h1v1h-1zM767 443h1v1h-1zM767 444h1v1h-1zM768 455h1v1h-1zM768 456h1v1h-1zM768 439h1v1h-1zM768 440h1v1h-1zM768 441h1v1h-1zM769 454h1v1h-1zM769 455h1v1h-1zM769 433h1v1h-1zM769 434h1v1h-1zM769 435h1v1h-1zM771 390h1v1h-1zM771 453h1v1h-1zM771 454h1v1h-1zM771 391h1v1h-1zM773 388h1v1h-1zM773 450h1v1h-1zM773 451h1v1h-1zM773 387h1v1h-1zM774 448h1v1h-1zM774 449h1v1h-1zM774 450h1v1h-1zM775 448h1v1h-1zM775 445h1v1h-1zM775 446h1v1h-1zM775 447h1v1h-1zM776 443h1v1h-1zM776 444h1v1h-1zM777 441h1v1h-1zM778 432h1v1h-1zM778 433h1v1h-1zM778 434h1v1h-1zM778 437h1v1h-1zM778 438h1v1h-1zM779 427h1v1h-1zM779 430h1v1h-1zM779 431h1v1h-1zM752 460h1v1h-1zM752 461h1v1h-1zM753 460h1v1h-1zM758 456h1v1h-1zM758 457h1v1h-1zM760 454h1v1h-1zM760 455h1v1h-1zM762 453h1v1h-1zM762 454h1v1h-1zM764 450h1v1h-1zM764 451h1v1h-1zM772 388h1v1h-1zM772 389h1v1h-1zM772 390h1v1h-1z" fill="#fff"/>
<rect x="640.5" y="386.5" width="251" height="115" fill="none" stroke="#808080"/>
<text x="722.9" y="517" fill="#808080" stroke="#808080" font-family="Liberation Sans, sans-serif" font-size="12" stroke-width="0.25" paint-order="stroke" textLength="85" lengthAdjust="spacingAndGlyphs" xml:space="preserve">evidence F2 trace</text>
</g>
<path d="M727 547h165v1h-165zM727 794h165v1h-165zM727 547h1v248h-1zM891 547h1v248h-1zM727 578h165v1h-165z" fill="#80ff80"/>
<text x="784" y="569" fill="#ffff80" stroke="#ffff80" font-family="Liberation Sans, sans-serif" font-size="12" stroke-width="0.25" paint-order="stroke" textLength="50" lengthAdjust="spacingAndGlyphs" xml:space="preserve">AIP output</text>
<text x="732.7" y="599.9" fill="#ffff80" stroke="#ffff80" font-family="Liberation Sans, sans-serif" font-size="12" stroke-width="0.25" paint-order="stroke" textLength="25.5" lengthAdjust="spacingAndGlyphs" xml:space="preserve">hmF2</text>
<text x="785.7" y="599.9" fill="#ffff80" stroke="#ffff80" font-family="Liberation Sans, sans-serif" font-size="12" stroke-width="0.25" paint-order="stroke" textLength="17.6" lengthAdjust="spacingAndGlyphs" xml:space="preserve">270</text>
<text x="832.8" y="599.9" fill="#ffff80" stroke="#ffff80" font-family="Liberation Sans, sans-serif" font-size="12" stroke-width="0.25" paint-order="stroke" textLength="13.7" lengthAdjust="spacingAndGlyphs" xml:space="preserve">km</text>
<text x="732.7" y="612.9" fill="#ffff80" stroke="#ffff80" font-family="Liberation Sans, sans-serif" font-size="12" stroke-width="0.25" paint-order="stroke" textLength="21.0" lengthAdjust="spacingAndGlyphs" xml:space="preserve">foF2</text>
<text x="791.5" y="612.9" fill="#ffff80" stroke="#ffff80" font-family="Liberation Sans, sans-serif" font-size="12" stroke-width="0.25" paint-order="stroke" textLength="21.0" lengthAdjust="spacingAndGlyphs" xml:space="preserve">09.3</text>
<text x="832.8" y="612.9" fill="#ffff80" stroke="#ffff80" font-family="Liberation Sans, sans-serif" font-size="12" stroke-width="0.25" paint-order="stroke" textLength="21.6" lengthAdjust="spacingAndGlyphs" xml:space="preserve">MHz</text>
<text x="732.7" y="625.8" fill="#ffff80" stroke="#ffff80" font-family="Liberation Sans, sans-serif" font-size="12" stroke-width="0.25" paint-order="stroke" textLength="19.6" lengthAdjust="spacingAndGlyphs" xml:space="preserve">foF1</text>
<text x="791.5" y="625.8" fill="#ffff80" stroke="#ffff80" font-family="Liberation Sans, sans-serif" font-size="12" stroke-width="0.25" paint-order="stroke" textLength="21.0" lengthAdjust="spacingAndGlyphs" xml:space="preserve">04.8</text>
<text x="832.8" y="625.8" fill="#ffff80" stroke="#ffff80" font-family="Liberation Sans, sans-serif" font-size="12" stroke-width="0.25" paint-order="stroke" textLength="21.6" lengthAdjust="spacingAndGlyphs" xml:space="preserve">MHz</text>
<text x="865.7" y="625.8" fill="#ffff80" stroke="#ffff80" font-family="Liberation Sans, sans-serif" font-size="12" stroke-width="0.25" paint-order="stroke" textLength="19.7" lengthAdjust="spacingAndGlyphs" xml:space="preserve">[PY]</text>
<text x="732.7" y="638.8" fill="#ffff80" stroke="#ffff80" font-family="Liberation Sans, sans-serif" font-size="12" stroke-width="0.25" paint-order="stroke" textLength="24.5" lengthAdjust="spacingAndGlyphs" xml:space="preserve">hmF1</text>
<text x="785.7" y="638.8" fill="#ffff80" stroke="#ffff80" font-family="Liberation Sans, sans-serif" font-size="12" stroke-width="0.25" paint-order="stroke" textLength="15.7" lengthAdjust="spacingAndGlyphs" xml:space="preserve">191</text>
<text x="832.8" y="638.8" fill="#ffff80" stroke="#ffff80" font-family="Liberation Sans, sans-serif" font-size="12" stroke-width="0.25" paint-order="stroke" textLength="13.7" lengthAdjust="spacingAndGlyphs" xml:space="preserve">km</text>
<text x="732.7" y="651.7" fill="#ffff80" stroke="#ffff80" font-family="Liberation Sans, sans-serif" font-size="12" stroke-width="0.25" paint-order="stroke" textLength="12.1" lengthAdjust="spacingAndGlyphs" xml:space="preserve">D1</text>
<text x="791.5" y="651.7" fill="#ffff80" stroke="#ffff80" font-family="Liberation Sans, sans-serif" font-size="12" stroke-width="0.25" paint-order="stroke" textLength="21.0" lengthAdjust="spacingAndGlyphs" xml:space="preserve">01.0</text>
<text x="732.7" y="664.7" fill="#ffff80" stroke="#ffff80" font-family="Liberation Sans, sans-serif" font-size="12" stroke-width="0.25" paint-order="stroke" textLength="14.7" lengthAdjust="spacingAndGlyphs" xml:space="preserve">foE</text>
<text x="797.8" y="664.7" fill="#ffff80" stroke="#ffff80" font-family="Liberation Sans, sans-serif" font-size="12" stroke-width="0.25" paint-order="stroke" textLength="14.7" lengthAdjust="spacingAndGlyphs" xml:space="preserve">3.4</text>
<text x="832.8" y="664.7" fill="#ffff80" stroke="#ffff80" font-family="Liberation Sans, sans-serif" font-size="12" stroke-width="0.25" paint-order="stroke" textLength="21.6" lengthAdjust="spacingAndGlyphs" xml:space="preserve">MHz</text>
<text x="732.7" y="677.7" fill="#ffff80" stroke="#ffff80" font-family="Liberation Sans, sans-serif" font-size="12" stroke-width="0.25" paint-order="stroke" textLength="19.6" lengthAdjust="spacingAndGlyphs" xml:space="preserve">hmE</text>
<text x="785.7" y="677.7" fill="#ffff80" stroke="#ffff80" font-family="Liberation Sans, sans-serif" font-size="12" stroke-width="0.25" paint-order="stroke" textLength="17.6" lengthAdjust="spacingAndGlyphs" xml:space="preserve">110</text>
<text x="832.8" y="677.7" fill="#ffff80" stroke="#ffff80" font-family="Liberation Sans, sans-serif" font-size="12" stroke-width="0.25" paint-order="stroke" textLength="13.7" lengthAdjust="spacingAndGlyphs" xml:space="preserve">km</text>
<text x="732.7" y="690.6" fill="#ffff80" stroke="#ffff80" font-family="Liberation Sans, sans-serif" font-size="12" stroke-width="0.25" paint-order="stroke" textLength="18.6" lengthAdjust="spacingAndGlyphs" xml:space="preserve">ymE</text>
<text x="791.9" y="690.6" fill="#ffff80" stroke="#ffff80" font-family="Liberation Sans, sans-serif" font-size="12" stroke-width="0.25" paint-order="stroke" textLength="10.8" lengthAdjust="spacingAndGlyphs" xml:space="preserve">20</text>
<text x="832.8" y="690.6" fill="#ffff80" stroke="#ffff80" font-family="Liberation Sans, sans-serif" font-size="12" stroke-width="0.25" paint-order="stroke" textLength="13.7" lengthAdjust="spacingAndGlyphs" xml:space="preserve">km</text>
<text x="732.7" y="703.6" fill="#ffff80" stroke="#ffff80" font-family="Liberation Sans, sans-serif" font-size="12" stroke-width="0.25" paint-order="stroke" textLength="23.5" lengthAdjust="spacingAndGlyphs" xml:space="preserve">h_vE</text>
<text x="785.7" y="703.6" fill="#ffff80" stroke="#ffff80" font-family="Liberation Sans, sans-serif" font-size="12" stroke-width="0.25" paint-order="stroke" textLength="17.6" lengthAdjust="spacingAndGlyphs" xml:space="preserve">119</text>
<text x="832.8" y="703.6" fill="#ffff80" stroke="#ffff80" font-family="Liberation Sans, sans-serif" font-size="12" stroke-width="0.25" paint-order="stroke" textLength="13.7" lengthAdjust="spacingAndGlyphs" xml:space="preserve">km</text>
<text x="732.7" y="716.5" fill="#ffff80" stroke="#ffff80" font-family="Liberation Sans, sans-serif" font-size="12" stroke-width="0.25" paint-order="stroke" textLength="31.8" lengthAdjust="spacingAndGlyphs" xml:space="preserve">Ewidth</text>
<text x="791.9" y="716.5" fill="#ffff80" stroke="#ffff80" font-family="Liberation Sans, sans-serif" font-size="12" stroke-width="0.25" paint-order="stroke" textLength="10.8" lengthAdjust="spacingAndGlyphs" xml:space="preserve">19</text>
<text x="832.8" y="716.5" fill="#ffff80" stroke="#ffff80" font-family="Liberation Sans, sans-serif" font-size="12" stroke-width="0.25" paint-order="stroke" textLength="13.7" lengthAdjust="spacingAndGlyphs" xml:space="preserve">km</text>
<text x="732.7" y="729.5" fill="#ffff80" stroke="#ffff80" font-family="Liberation Sans, sans-serif" font-size="12" stroke-width="0.25" paint-order="stroke" textLength="41.6" lengthAdjust="spacingAndGlyphs" xml:space="preserve">DelN_vE</text>
<text x="791.5" y="729.5" fill="#ffff80" stroke="#ffff80" font-family="Liberation Sans, sans-serif" font-size="12" stroke-width="0.25" paint-order="stroke" textLength="19.7" lengthAdjust="spacingAndGlyphs" xml:space="preserve">00.1</text>
<text x="832.8" y="729.5" fill="#ffff80" stroke="#ffff80" font-family="Liberation Sans, sans-serif" font-size="12" stroke-width="0.25" paint-order="stroke" textLength="28.8" lengthAdjust="spacingAndGlyphs" xml:space="preserve">m^(-3)</text>
<text x="732.7" y="742.5" fill="#ffff80" stroke="#ffff80" font-family="Liberation Sans, sans-serif" font-size="12" stroke-width="0.25" paint-order="stroke" textLength="13.1" lengthAdjust="spacingAndGlyphs" xml:space="preserve">B0</text>
<text x="785.7" y="742.5" fill="#ffff80" stroke="#ffff80" font-family="Liberation Sans, sans-serif" font-size="12" stroke-width="0.25" paint-order="stroke" textLength="26.8" lengthAdjust="spacingAndGlyphs" xml:space="preserve">083.0</text>
<text x="832.8" y="742.5" fill="#ffff80" stroke="#ffff80" font-family="Liberation Sans, sans-serif" font-size="12" stroke-width="0.25" paint-order="stroke" textLength="13.7" lengthAdjust="spacingAndGlyphs" xml:space="preserve">km</text>
<text x="732.7" y="755.4" fill="#ffff80" stroke="#ffff80" font-family="Liberation Sans, sans-serif" font-size="12" stroke-width="0.25" paint-order="stroke" textLength="11.3" lengthAdjust="spacingAndGlyphs" xml:space="preserve">B1</text>
<text x="791.5" y="755.4" fill="#ffff80" stroke="#ffff80" font-family="Liberation Sans, sans-serif" font-size="12" stroke-width="0.25" paint-order="stroke" textLength="21.0" lengthAdjust="spacingAndGlyphs" xml:space="preserve">01.6</text>
<text x="732.7" y="768.4" fill="#ffff80" stroke="#ffff80" font-family="Liberation Sans, sans-serif" font-size="12" stroke-width="0.25" paint-order="stroke" textLength="43.1" lengthAdjust="spacingAndGlyphs" xml:space="preserve">TEC[Bot]</text>
<text x="785.7" y="768.4" fill="#ffff80" stroke="#ffff80" font-family="Liberation Sans, sans-serif" font-size="12" stroke-width="0.25" paint-order="stroke" textLength="26.8" lengthAdjust="spacingAndGlyphs" xml:space="preserve">007.5</text>
<text x="832.8" y="768.4" fill="#ffff80" stroke="#ffff80" font-family="Liberation Sans, sans-serif" font-size="12" stroke-width="0.25" paint-order="stroke" textLength="27.4" lengthAdjust="spacingAndGlyphs" xml:space="preserve">TECU</text>
<text x="732.7" y="781.3" fill="#ffff80" stroke="#ffff80" font-family="Liberation Sans, sans-serif" font-size="12" stroke-width="0.25" paint-order="stroke" textLength="46.1" lengthAdjust="spacingAndGlyphs" xml:space="preserve">TEC[Top]</text>
<text x="785.7" y="781.3" fill="#ffff80" stroke="#ffff80" font-family="Liberation Sans, sans-serif" font-size="12" stroke-width="0.25" paint-order="stroke" textLength="26.8" lengthAdjust="spacingAndGlyphs" xml:space="preserve">011.8</text>
<text x="832.8" y="781.3" fill="#ffff80" stroke="#ffff80" font-family="Liberation Sans, sans-serif" font-size="12" stroke-width="0.25" paint-order="stroke" textLength="27.4" lengthAdjust="spacingAndGlyphs" xml:space="preserve">TECU</text>
</svg></body></html>
